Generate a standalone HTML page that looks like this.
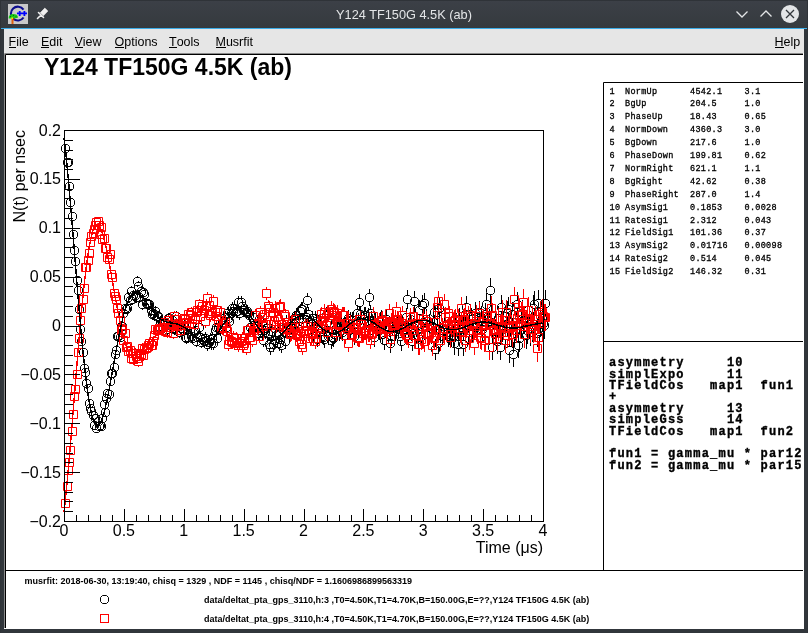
<!DOCTYPE html>
<html><head><meta charset="utf-8">
<style>
html,body{margin:0;padding:0;width:808px;height:633px;overflow:hidden;background:#31363b;}
body{position:relative;font-family:"Liberation Sans",sans-serif;}
#tb{position:absolute;left:0;top:0;width:808px;height:28px;background:linear-gradient(#3c4047,#353a3e);}
#blue{position:absolute;left:1px;top:28px;width:806px;height:1px;background:#3daee9;}
#menu{position:absolute;left:4px;top:29px;width:800px;height:25px;background:#e6e6e6;font-size:12.5px;color:#000;}
#menu span{position:absolute;top:6px;}
#menu u{text-decoration:none;position:relative;}#menu u::after{content:"";position:absolute;left:0;right:0;top:12px;height:1px;background:#000;}
#title{position:absolute;left:0;top:7px;width:808px;text-align:center;color:#e3e5e7;font-size:12.75px;}
#canvas{position:absolute;left:4px;top:53px;will-change:transform;}
#menu,#title{will-change:transform;}
</style></head><body>
<div id="tb"></div><div style="position:absolute;left:0;top:0;width:808px;height:1px;background:#2f3338"></div><div style="position:absolute;left:0;top:0;width:1px;height:633px;background:#2f3338"></div><div style="position:absolute;left:807px;top:0;width:1px;height:633px;background:#2f3338"></div>
<div id="title" style="padding-left:0px">Y124 TF150G 4.5K (ab)</div>
<svg style="position:absolute;left:0;top:0" width="808" height="30">
  <rect x="8" y="4" width="20" height="20" fill="#c9c9c9"/>
  <path d="M23.5 9.6 A6.95 6.95 0 1 0 23.56 17.5" stroke="#0c0c8e" stroke-width="2.1" fill="none"/>
  <path d="M17 13.4H27M19.7 11v5M24.4 11v5" stroke="#0000ff" stroke-width="1.8" fill="none"/>
  <path d="M8.6 18.2 C8.6 15.5 10.5 14.1 13.2 14.1 C15.9 14.1 18 15.2 18 17.6 C16.5 18.6 10.5 18.8 8.6 18.2Z" fill="#18c818"/>
  <path d="M10 16.5h1M13 15.5h1M15.5 16.8h1" stroke="#0a6a0a" stroke-width="1"/>
  <path d="M12.5 18.6V24" stroke="#e0600c" stroke-width="2"/>
  <circle cx="12.2" cy="18.3" r="1" fill="#f0e800"/>
  <circle cx="13.6" cy="19.4" r="0.8" fill="#c01010"/>
  <polygon points="44.8,8.1 47.9,11.1 43.4,15.8 40.3,12.8" fill="#f0f0f0" stroke="#f0f0f0" stroke-width="0.6" stroke-linejoin="round"/>
  <path d="M38.5 12.5L43.5 17.5M41 15L37.5 18.5" stroke="#f0f0f0" stroke-width="1.6" stroke-linecap="round"/>
  <path d="M736.5 11.5 l5.5 5.5 l5.5 -5.5" stroke="#e3e5e7" stroke-width="1.3" fill="none"/>
  <path d="M760.5 16.5 l5.5 -5.5 l5.5 5.5" stroke="#e3e5e7" stroke-width="1.3" fill="none"/>
  <circle cx="790" cy="14" r="9" fill="#e3e5e7"/>
  <path d="M786 10 l8 8 M794 10 l-8 8" stroke="#31363b" stroke-width="1.3"/>
</svg>
<div id="blue"></div>
<div id="menu">
 <span style="left:4.5px"><u>F</u>ile</span>
 <span style="left:37px"><u>E</u>dit</span>
 <span style="left:70.5px"><u>V</u>iew</span>
 <span style="left:110.5px"><u>O</u>ptions</span>
 <span style="left:165px"><u>T</u>ools</span>
 <span style="left:211.5px"><u>M</u>usrfit</span>
 <span style="left:770.5px"><u>H</u>elp</span>
</div>
<svg id="canvas" width="800" height="576" viewBox="4 53 800 576">
 <rect x="4" y="53" width="800" height="576" fill="#fff"/>
 <path d="M4.5 628 V53.5 H803" stroke="#8a8a8a" stroke-width="1" fill="none"/>
 <path d="M5.5 628 V54.5 H803" stroke="#000" stroke-width="1" fill="none"/>
 <text x="44" y="74.7" font-family="Liberation Sans" font-weight="bold" font-size="24" textLength="248" lengthAdjust="spacingAndGlyphs">Y124 TF150G 4.5K (ab)</text>
 <g clip-path="none"><path d="M128.5 292v1M128.5 302v1M130.5 295v1M130.5 305v1M131.5 286v1M131.5 296v1M132.5 294v1M132.5 304v1M133.5 290v1M133.5 300v1M135.5 290v1M135.5 300v1M136.5 292v1M136.5 302v1M137.5 276v1M137.5 286v1M138.5 281v1M138.5 291v1M139.5 292v1M139.5 302v1M141.5 286v1M141.5 296v1M142.5 299v1M142.5 309v1M143.5 287v1M143.5 297v1M144.5 289v1M144.5 299v1M146.5 298v1M146.5 308v1M147.5 299v1M147.5 309v1M148.5 299v1M148.5 309v1M149.5 299v1M149.5 309v1M151.5 305v1M151.5 315v1M152.5 309v1M152.5 319v1M153.5 308v1M153.5 318v1M154.5 310v1M154.5 320v1M155.5 306v1M155.5 316v1M157.5 311v1M157.5 321v1M158.5 311v1M158.5 321v1M159.5 321v1M159.5 331v1M160.5 316v1M160.5 326v1M162.5 317v1M162.5 327v1M163.5 318v1M163.5 328v1M164.5 317v1M164.5 327v1M165.5 318v1M165.5 328v1M167.5 324v1M167.5 334v1M168.5 313v1M168.5 323v1M169.5 313v1M169.5 323v1M170.5 320v1M170.5 330v1M172.5 315v1M172.5 325v1M173.5 323v1M173.5 333v1M174.5 324v1M174.5 334v1M175.5 320v1M175.5 330v1M176.5 311v1M176.5 321v1M178.5 320v1M178.5 330v1M179.5 327v1M179.5 337v1M180.5 319v1M180.5 329v1M181.5 323v1M181.5 333v1M183.5 325v1M183.5 335v1M184.5 320v1M184.5 330v1M185.5 332v1M185.5 342v1M186.5 333v1M186.5 343v1M188.5 332v1M188.5 342v1M189.5 320v1M189.5 330v1M190.5 326v1M190.5 336v1M191.5 331v1M191.5 341v1M192.5 333v1M192.5 343v1M194.5 327v1M194.5 337v1M195.5 325v1M195.5 335v1M196.5 336v1M196.5 346v1M197.5 332v1M197.5 342v1M199.5 322v1M199.5 332v1M200.5 332v1M200.5 342v1M201.5 337v1M201.5 347v1M202.5 334v1M202.5 344v1M204.5 336v1M204.5 346v1M205.5 332v2M205.5 343v2M206.5 334v2M206.5 345v2M207.5 338v2M207.5 349v2M209.5 336v2M209.5 347v2M210.5 333v2M210.5 344v2M211.5 337v2M211.5 348v2M212.5 332v2M212.5 343v2M213.5 337v2M213.5 348v2M215.5 324v2M215.5 335v2M216.5 321v2M216.5 332v2M217.5 332v2M217.5 343v2M218.5 321v2M218.5 332v2M220.5 323v2M220.5 334v2M221.5 321v2M221.5 332v2M222.5 321v2M222.5 332v2M223.5 317v2M223.5 328v2M225.5 311v2M225.5 322v2M226.5 321v2M226.5 332v2M227.5 307v2M227.5 318v2M228.5 312v2M228.5 323v2M229.5 315v2M229.5 326v2M231.5 307v2M231.5 318v2M232.5 302v2M232.5 313v2M233.5 305v2M233.5 316v2M234.5 302v2M234.5 313v2M236.5 305v2M236.5 316v2M237.5 305v2M237.5 316v2M238.5 296v2M238.5 307v2M239.5 307v2M239.5 318v2M241.5 296v2M241.5 307v2M242.5 300v2M242.5 311v2M243.5 304v2M243.5 315v2M244.5 304v2M244.5 315v2M246.5 306v2M246.5 317v2M247.5 305v2M247.5 316v2M248.5 307v2M248.5 318v2M249.5 309v2M249.5 320v2M250.5 321v2M250.5 332v2M252.5 324v2M252.5 335v2M253.5 311v2M253.5 322v2M254.5 319v2M254.5 330v2M255.5 320v2M255.5 331v2M257.5 320v2M257.5 331v2M258.5 327v2M258.5 338v2M259.5 313v2M259.5 324v2M260.5 324v2M260.5 335v2M262.5 327v2M262.5 338v2M263.5 334v2M263.5 345v2M264.5 324v2M264.5 335v2M265.5 326v2M265.5 337v2M266.5 322v2M266.5 333v2M268.5 327v2M268.5 338v2M269.5 337v3M269.5 349v3M270.5 340v3M270.5 352v3M271.5 324v3M271.5 336v3M273.5 337v3M273.5 349v3M274.5 333v3M274.5 345v3M275.5 333v3M275.5 345v3M276.5 328v3M276.5 340v3M278.5 327v3M278.5 339v3M279.5 336v3M279.5 348v3M280.5 332v3M280.5 344v3M281.5 338v3M281.5 350v3M283.5 322v3M283.5 334v3M284.5 325v3M284.5 337v3M285.5 334v3M285.5 346v3M286.5 315v3M286.5 327v3M287.5 320v3M287.5 332v3M289.5 325v3M289.5 337v3M290.5 319v3M290.5 331v3M291.5 319v3M291.5 331v3M292.5 313v3M292.5 325v3M294.5 311v3M294.5 323v3M295.5 315v3M295.5 327v3M296.5 308v3M296.5 320v3M297.5 327v3M297.5 339v3M299.5 311v3M299.5 323v3M300.5 304v3M300.5 316v3M301.5 302v3M301.5 314v3M302.5 302v3M302.5 314v3M303.5 315v3M303.5 327v3M305.5 319v3M305.5 331v3M306.5 310v3M306.5 322v3M307.5 293v3M307.5 305v3M308.5 307v3M308.5 319v3M310.5 315v3M310.5 327v3M311.5 322v3M311.5 334v3M312.5 311v3M312.5 323v3M313.5 316v3M313.5 328v3M315.5 311v3M315.5 323v3M316.5 314v3M316.5 326v3M317.5 332v3M317.5 344v3M318.5 318v3M318.5 330v3M320.5 313v3M320.5 325v3M321.5 324v3M321.5 336v3M322.5 329v3M322.5 341v3M323.5 330v3M323.5 342v3M324.5 331v4M324.5 344v4M326.5 307v4M326.5 320v4M327.5 314v4M327.5 327v4M328.5 328v4M328.5 341v4M329.5 315v4M329.5 328v4M331.5 332v4M331.5 345v4M332.5 329v4M332.5 342v4M333.5 330v4M333.5 343v4M334.5 326v4M334.5 339v4M336.5 320v4M336.5 333v4M337.5 310v4M337.5 323v4M338.5 319v4M338.5 332v4M339.5 324v4M339.5 337v4M340.5 322v4M340.5 335v4M342.5 324v4M342.5 337v4M343.5 318v4M343.5 331v4M344.5 327v4M344.5 340v4M345.5 317v4M345.5 330v4M347.5 315v4M347.5 328v4M348.5 310v4M348.5 323v4M349.5 322v4M349.5 335v4M350.5 312v4M350.5 325v4M352.5 312v4M352.5 325v4M353.5 320v4M353.5 333v4M354.5 328v4M354.5 341v4M355.5 316v4M355.5 329v4M357.5 305v4M357.5 318v4M358.5 313v4M358.5 326v4M359.5 294v4M359.5 307v4M360.5 306v4M360.5 319v4M361.5 316v4M361.5 329v4M363.5 311v4M363.5 324v4M364.5 307v4M364.5 320v4M365.5 307v4M365.5 320v4M366.5 313v4M366.5 326v4M368.5 308v4M368.5 321v4M369.5 289v4M369.5 302v4M370.5 305v4M370.5 318v4M371.5 311v5M371.5 325v5M373.5 317v5M373.5 331v5M374.5 328v5M374.5 342v5M375.5 313v5M375.5 327v5M376.5 319v5M376.5 333v5M377.5 317v5M377.5 331v5M379.5 321v5M379.5 335v5M380.5 312v5M380.5 326v5M381.5 310v5M381.5 324v5M382.5 325v5M382.5 339v5M384.5 331v5M384.5 345v5M385.5 318v5M385.5 332v5M386.5 310v5M386.5 324v5M387.5 318v5M387.5 332v5M389.5 318v5M389.5 332v5M390.5 334v5M390.5 348v5M391.5 327v5M391.5 341v5M392.5 317v5M392.5 331v5M394.5 319v5M394.5 333v5M395.5 322v5M395.5 336v5M396.5 317v5M396.5 331v5M397.5 314v5M397.5 328v5M398.5 320v5M398.5 334v5M400.5 327v5M400.5 341v5M401.5 332v5M401.5 346v5M402.5 318v5M402.5 332v5M403.5 320v5M403.5 334v5M405.5 320v5M405.5 334v5M406.5 308v5M406.5 322v5M407.5 290v5M407.5 304v5M408.5 318v5M408.5 332v5M410.5 310v5M410.5 324v5M411.5 322v5M411.5 336v5M412.5 332v5M412.5 346v5M413.5 318v5M413.5 332v5M414.5 291v6M414.5 306v6M416.5 316v6M416.5 331v6M417.5 313v6M417.5 328v6M418.5 327v6M418.5 342v6M419.5 300v6M419.5 315v6M421.5 326v6M421.5 341v6M422.5 295v6M422.5 310v6M423.5 312v6M423.5 327v6M424.5 293v6M424.5 308v6M426.5 309v6M426.5 324v6M427.5 317v6M427.5 332v6M428.5 324v6M428.5 339v6M429.5 314v6M429.5 329v6M431.5 323v6M431.5 338v6M432.5 318v6M432.5 333v6M433.5 312v6M433.5 327v6M434.5 302v6M434.5 317v6M435.5 339v6M435.5 354v6M437.5 302v6M437.5 317v6M438.5 333v6M438.5 348v6M439.5 298v6M439.5 313v6M440.5 322v6M440.5 337v6M442.5 320v6M442.5 335v6M443.5 322v6M443.5 337v6M444.5 316v6M444.5 331v6M445.5 319v6M445.5 334v6M447.5 322v6M447.5 337v6M448.5 326v6M448.5 341v6M449.5 324v6M449.5 339v6M450.5 319v6M450.5 334v6M451.5 325v6M451.5 340v6M453.5 325v7M453.5 341v7M454.5 332v7M454.5 348v7M455.5 318v7M455.5 334v7M456.5 313v7M456.5 329v7M458.5 333v7M458.5 349v7M459.5 308v7M459.5 324v7M460.5 318v7M460.5 334v7M461.5 316v7M461.5 332v7M463.5 333v7M463.5 349v7M464.5 310v7M464.5 326v7M465.5 303v7M465.5 319v7M466.5 296v7M466.5 312v7M468.5 321v7M468.5 337v7M469.5 315v7M469.5 331v7M470.5 306v7M470.5 322v7M471.5 308v7M471.5 324v7M472.5 319v7M472.5 335v7M474.5 312v7M474.5 328v7M475.5 302v7M475.5 318v7M476.5 306v7M476.5 322v7M477.5 312v7M477.5 328v7M479.5 301v7M479.5 317v7M480.5 326v7M480.5 342v7M481.5 306v7M481.5 322v7M482.5 318v7M482.5 334v7M484.5 315v7M484.5 331v7M485.5 303v7M485.5 319v7M486.5 293v7M486.5 309v7M487.5 305v8M487.5 322v8M489.5 309v8M489.5 326v8M490.5 278v8M490.5 295v8M491.5 303v8M491.5 320v8M492.5 335v8M492.5 352v8M493.5 318v8M493.5 335v8M495.5 319v8M495.5 336v8M496.5 319v8M496.5 336v8M497.5 329v8M497.5 346v8M498.5 306v8M498.5 323v8M500.5 335v8M500.5 352v8M501.5 295v8M501.5 312v8M502.5 317v8M502.5 334v8M503.5 313v8M503.5 330v8M505.5 323v8M505.5 340v8M506.5 304v8M506.5 321v8M507.5 301v8M507.5 318v8M508.5 297v8M508.5 314v8M509.5 338v8M509.5 355v8M511.5 322v8M511.5 339v8M512.5 302v8M512.5 319v8M513.5 342v8M513.5 359v8M514.5 322v8M514.5 339v8M516.5 318v8M516.5 335v8M517.5 292v8M517.5 309v8M518.5 333v8M518.5 350v8M519.5 325v9M519.5 343v9M521.5 311v9M521.5 329v9M522.5 300v9M522.5 318v9M523.5 307v9M523.5 325v9M524.5 307v9M524.5 325v9M526.5 322v9M526.5 340v9M527.5 317v9M527.5 335v9M528.5 297v9M528.5 315v9M529.5 311v9M529.5 329v9M530.5 319v9M530.5 337v9M532.5 315v9M532.5 333v9M533.5 295v9M533.5 313v9M534.5 291v9M534.5 309v9M535.5 306v9M535.5 324v9M537.5 320v9M537.5 338v9M538.5 290v9M538.5 308v9M539.5 318v9M539.5 336v9M540.5 309v9M540.5 327v9M542.5 305v9M542.5 323v9M543.5 310v9M543.5 328v9M544.5 312v9M544.5 330v9M545.5 290v9M545.5 308v9" stroke="#000000" stroke-width="1" fill="none" shape-rendering="crispEdges"/>
<path d="M63.5 144.5h4l2 2v4l-2 2h-4l-2 -2v-4zM65.5 158.5h4l2 2v4l-2 2h-4l-2 -2v-4zM66.5 158.5h4l2 2v4l-2 2h-4l-2 -2v-4zM67.5 182.5h4l2 2v4l-2 2h-4l-2 -2v-4zM68.5 198.5h4l2 2v4l-2 2h-4l-2 -2v-4zM70.5 212.5h4l2 2v4l-2 2h-4l-2 -2v-4zM71.5 230.5h4l2 2v4l-2 2h-4l-2 -2v-4zM72.5 246.5h4l2 2v4l-2 2h-4l-2 -2v-4zM73.5 257.5h4l2 2v4l-2 2h-4l-2 -2v-4zM75.5 276.5h4l2 2v4l-2 2h-4l-2 -2v-4zM76.5 286.5h4l2 2v4l-2 2h-4l-2 -2v-4zM77.5 305.5h4l2 2v4l-2 2h-4l-2 -2v-4zM78.5 325.5h4l2 2v4l-2 2h-4l-2 -2v-4zM79.5 337.5h4l2 2v4l-2 2h-4l-2 -2v-4zM81.5 348.5h4l2 2v4l-2 2h-4l-2 -2v-4zM82.5 364.5h4l2 2v4l-2 2h-4l-2 -2v-4zM83.5 368.5h4l2 2v4l-2 2h-4l-2 -2v-4zM84.5 379.5h4l2 2v4l-2 2h-4l-2 -2v-4zM86.5 384.5h4l2 2v4l-2 2h-4l-2 -2v-4zM87.5 399.5h4l2 2v4l-2 2h-4l-2 -2v-4zM88.5 404.5h4l2 2v4l-2 2h-4l-2 -2v-4zM89.5 407.5h4l2 2v4l-2 2h-4l-2 -2v-4zM91.5 411.5h4l2 2v4l-2 2h-4l-2 -2v-4zM92.5 421.5h4l2 2v4l-2 2h-4l-2 -2v-4zM93.5 414.5h4l2 2v4l-2 2h-4l-2 -2v-4zM94.5 424.5h4l2 2v4l-2 2h-4l-2 -2v-4zM96.5 417.5h4l2 2v4l-2 2h-4l-2 -2v-4zM97.5 422.5h4l2 2v4l-2 2h-4l-2 -2v-4zM98.5 421.5h4l2 2v4l-2 2h-4l-2 -2v-4zM99.5 422.5h4l2 2v4l-2 2h-4l-2 -2v-4zM100.5 414.5h4l2 2v4l-2 2h-4l-2 -2v-4zM102.5 400.5h4l2 2v4l-2 2h-4l-2 -2v-4zM103.5 408.5h4l2 2v4l-2 2h-4l-2 -2v-4zM104.5 394.5h4l2 2v4l-2 2h-4l-2 -2v-4zM105.5 389.5h4l2 2v4l-2 2h-4l-2 -2v-4zM107.5 390.5h4l2 2v4l-2 2h-4l-2 -2v-4zM108.5 377.5h4l2 2v4l-2 2h-4l-2 -2v-4zM109.5 369.5h4l2 2v4l-2 2h-4l-2 -2v-4zM110.5 369.5h4l2 2v4l-2 2h-4l-2 -2v-4zM112.5 363.5h4l2 2v4l-2 2h-4l-2 -2v-4zM113.5 350.5h4l2 2v4l-2 2h-4l-2 -2v-4zM114.5 346.5h4l2 2v4l-2 2h-4l-2 -2v-4zM115.5 332.5h4l2 2v4l-2 2h-4l-2 -2v-4zM116.5 332.5h4l2 2v4l-2 2h-4l-2 -2v-4zM118.5 333.5h4l2 2v4l-2 2h-4l-2 -2v-4zM119.5 322.5h4l2 2v4l-2 2h-4l-2 -2v-4zM120.5 322.5h4l2 2v4l-2 2h-4l-2 -2v-4zM121.5 309.5h4l2 2v4l-2 2h-4l-2 -2v-4zM123.5 304.5h4l2 2v4l-2 2h-4l-2 -2v-4zM124.5 305.5h4l2 2v4l-2 2h-4l-2 -2v-4zM125.5 304.5h4l2 2v4l-2 2h-4l-2 -2v-4zM126.5 293.5h4l2 2v4l-2 2h-4l-2 -2v-4zM128.5 296.5h4l2 2v4l-2 2h-4l-2 -2v-4zM129.5 287.5h4l2 2v4l-2 2h-4l-2 -2v-4zM130.5 295.5h4l2 2v4l-2 2h-4l-2 -2v-4zM131.5 291.5h4l2 2v4l-2 2h-4l-2 -2v-4zM133.5 291.5h4l2 2v4l-2 2h-4l-2 -2v-4zM134.5 293.5h4l2 2v4l-2 2h-4l-2 -2v-4zM135.5 277.5h4l2 2v4l-2 2h-4l-2 -2v-4zM136.5 282.5h4l2 2v4l-2 2h-4l-2 -2v-4zM137.5 293.5h4l2 2v4l-2 2h-4l-2 -2v-4zM139.5 287.5h4l2 2v4l-2 2h-4l-2 -2v-4zM140.5 300.5h4l2 2v4l-2 2h-4l-2 -2v-4zM141.5 288.5h4l2 2v4l-2 2h-4l-2 -2v-4zM142.5 290.5h4l2 2v4l-2 2h-4l-2 -2v-4zM144.5 299.5h4l2 2v4l-2 2h-4l-2 -2v-4zM145.5 300.5h4l2 2v4l-2 2h-4l-2 -2v-4zM146.5 300.5h4l2 2v4l-2 2h-4l-2 -2v-4zM147.5 300.5h4l2 2v4l-2 2h-4l-2 -2v-4zM149.5 306.5h4l2 2v4l-2 2h-4l-2 -2v-4zM150.5 310.5h4l2 2v4l-2 2h-4l-2 -2v-4zM151.5 309.5h4l2 2v4l-2 2h-4l-2 -2v-4zM152.5 311.5h4l2 2v4l-2 2h-4l-2 -2v-4zM153.5 307.5h4l2 2v4l-2 2h-4l-2 -2v-4zM155.5 312.5h4l2 2v4l-2 2h-4l-2 -2v-4zM156.5 312.5h4l2 2v4l-2 2h-4l-2 -2v-4zM157.5 322.5h4l2 2v4l-2 2h-4l-2 -2v-4zM158.5 317.5h4l2 2v4l-2 2h-4l-2 -2v-4zM160.5 318.5h4l2 2v4l-2 2h-4l-2 -2v-4zM161.5 319.5h4l2 2v4l-2 2h-4l-2 -2v-4zM162.5 318.5h4l2 2v4l-2 2h-4l-2 -2v-4zM163.5 319.5h4l2 2v4l-2 2h-4l-2 -2v-4zM165.5 325.5h4l2 2v4l-2 2h-4l-2 -2v-4zM166.5 314.5h4l2 2v4l-2 2h-4l-2 -2v-4zM167.5 314.5h4l2 2v4l-2 2h-4l-2 -2v-4zM168.5 321.5h4l2 2v4l-2 2h-4l-2 -2v-4zM170.5 316.5h4l2 2v4l-2 2h-4l-2 -2v-4zM171.5 324.5h4l2 2v4l-2 2h-4l-2 -2v-4zM172.5 325.5h4l2 2v4l-2 2h-4l-2 -2v-4zM173.5 321.5h4l2 2v4l-2 2h-4l-2 -2v-4zM174.5 312.5h4l2 2v4l-2 2h-4l-2 -2v-4zM176.5 321.5h4l2 2v4l-2 2h-4l-2 -2v-4zM177.5 328.5h4l2 2v4l-2 2h-4l-2 -2v-4zM178.5 320.5h4l2 2v4l-2 2h-4l-2 -2v-4zM179.5 324.5h4l2 2v4l-2 2h-4l-2 -2v-4zM181.5 326.5h4l2 2v4l-2 2h-4l-2 -2v-4zM182.5 321.5h4l2 2v4l-2 2h-4l-2 -2v-4zM183.5 333.5h4l2 2v4l-2 2h-4l-2 -2v-4zM184.5 334.5h4l2 2v4l-2 2h-4l-2 -2v-4zM186.5 333.5h4l2 2v4l-2 2h-4l-2 -2v-4zM187.5 321.5h4l2 2v4l-2 2h-4l-2 -2v-4zM188.5 327.5h4l2 2v4l-2 2h-4l-2 -2v-4zM189.5 332.5h4l2 2v4l-2 2h-4l-2 -2v-4zM190.5 334.5h4l2 2v4l-2 2h-4l-2 -2v-4zM192.5 328.5h4l2 2v4l-2 2h-4l-2 -2v-4zM193.5 326.5h4l2 2v4l-2 2h-4l-2 -2v-4zM194.5 337.5h4l2 2v4l-2 2h-4l-2 -2v-4zM195.5 333.5h4l2 2v4l-2 2h-4l-2 -2v-4zM197.5 323.5h4l2 2v4l-2 2h-4l-2 -2v-4zM198.5 333.5h4l2 2v4l-2 2h-4l-2 -2v-4zM199.5 338.5h4l2 2v4l-2 2h-4l-2 -2v-4zM200.5 335.5h4l2 2v4l-2 2h-4l-2 -2v-4zM202.5 337.5h4l2 2v4l-2 2h-4l-2 -2v-4zM203.5 334.5h4l2 2v4l-2 2h-4l-2 -2v-4zM204.5 336.5h4l2 2v4l-2 2h-4l-2 -2v-4zM205.5 340.5h4l2 2v4l-2 2h-4l-2 -2v-4zM207.5 338.5h4l2 2v4l-2 2h-4l-2 -2v-4zM208.5 335.5h4l2 2v4l-2 2h-4l-2 -2v-4zM209.5 339.5h4l2 2v4l-2 2h-4l-2 -2v-4zM210.5 334.5h4l2 2v4l-2 2h-4l-2 -2v-4zM211.5 339.5h4l2 2v4l-2 2h-4l-2 -2v-4zM213.5 326.5h4l2 2v4l-2 2h-4l-2 -2v-4zM214.5 323.5h4l2 2v4l-2 2h-4l-2 -2v-4zM215.5 334.5h4l2 2v4l-2 2h-4l-2 -2v-4zM216.5 323.5h4l2 2v4l-2 2h-4l-2 -2v-4zM218.5 325.5h4l2 2v4l-2 2h-4l-2 -2v-4zM219.5 323.5h4l2 2v4l-2 2h-4l-2 -2v-4zM220.5 323.5h4l2 2v4l-2 2h-4l-2 -2v-4zM221.5 319.5h4l2 2v4l-2 2h-4l-2 -2v-4zM223.5 313.5h4l2 2v4l-2 2h-4l-2 -2v-4zM224.5 323.5h4l2 2v4l-2 2h-4l-2 -2v-4zM225.5 309.5h4l2 2v4l-2 2h-4l-2 -2v-4zM226.5 314.5h4l2 2v4l-2 2h-4l-2 -2v-4zM227.5 317.5h4l2 2v4l-2 2h-4l-2 -2v-4zM229.5 309.5h4l2 2v4l-2 2h-4l-2 -2v-4zM230.5 304.5h4l2 2v4l-2 2h-4l-2 -2v-4zM231.5 307.5h4l2 2v4l-2 2h-4l-2 -2v-4zM232.5 304.5h4l2 2v4l-2 2h-4l-2 -2v-4zM234.5 307.5h4l2 2v4l-2 2h-4l-2 -2v-4zM235.5 307.5h4l2 2v4l-2 2h-4l-2 -2v-4zM236.5 298.5h4l2 2v4l-2 2h-4l-2 -2v-4zM237.5 309.5h4l2 2v4l-2 2h-4l-2 -2v-4zM239.5 298.5h4l2 2v4l-2 2h-4l-2 -2v-4zM240.5 302.5h4l2 2v4l-2 2h-4l-2 -2v-4zM241.5 306.5h4l2 2v4l-2 2h-4l-2 -2v-4zM242.5 306.5h4l2 2v4l-2 2h-4l-2 -2v-4zM244.5 308.5h4l2 2v4l-2 2h-4l-2 -2v-4zM245.5 307.5h4l2 2v4l-2 2h-4l-2 -2v-4zM246.5 309.5h4l2 2v4l-2 2h-4l-2 -2v-4zM247.5 311.5h4l2 2v4l-2 2h-4l-2 -2v-4zM248.5 323.5h4l2 2v4l-2 2h-4l-2 -2v-4zM250.5 326.5h4l2 2v4l-2 2h-4l-2 -2v-4zM251.5 313.5h4l2 2v4l-2 2h-4l-2 -2v-4zM252.5 321.5h4l2 2v4l-2 2h-4l-2 -2v-4zM253.5 322.5h4l2 2v4l-2 2h-4l-2 -2v-4zM255.5 322.5h4l2 2v4l-2 2h-4l-2 -2v-4zM256.5 329.5h4l2 2v4l-2 2h-4l-2 -2v-4zM257.5 315.5h4l2 2v4l-2 2h-4l-2 -2v-4zM258.5 326.5h4l2 2v4l-2 2h-4l-2 -2v-4zM260.5 329.5h4l2 2v4l-2 2h-4l-2 -2v-4zM261.5 336.5h4l2 2v4l-2 2h-4l-2 -2v-4zM262.5 326.5h4l2 2v4l-2 2h-4l-2 -2v-4zM263.5 328.5h4l2 2v4l-2 2h-4l-2 -2v-4zM264.5 324.5h4l2 2v4l-2 2h-4l-2 -2v-4zM266.5 329.5h4l2 2v4l-2 2h-4l-2 -2v-4zM267.5 340.5h4l2 2v4l-2 2h-4l-2 -2v-4zM268.5 343.5h4l2 2v4l-2 2h-4l-2 -2v-4zM269.5 327.5h4l2 2v4l-2 2h-4l-2 -2v-4zM271.5 340.5h4l2 2v4l-2 2h-4l-2 -2v-4zM272.5 336.5h4l2 2v4l-2 2h-4l-2 -2v-4zM273.5 336.5h4l2 2v4l-2 2h-4l-2 -2v-4zM274.5 331.5h4l2 2v4l-2 2h-4l-2 -2v-4zM276.5 330.5h4l2 2v4l-2 2h-4l-2 -2v-4zM277.5 339.5h4l2 2v4l-2 2h-4l-2 -2v-4zM278.5 335.5h4l2 2v4l-2 2h-4l-2 -2v-4zM279.5 341.5h4l2 2v4l-2 2h-4l-2 -2v-4zM281.5 325.5h4l2 2v4l-2 2h-4l-2 -2v-4zM282.5 328.5h4l2 2v4l-2 2h-4l-2 -2v-4zM283.5 337.5h4l2 2v4l-2 2h-4l-2 -2v-4zM284.5 318.5h4l2 2v4l-2 2h-4l-2 -2v-4zM285.5 323.5h4l2 2v4l-2 2h-4l-2 -2v-4zM287.5 328.5h4l2 2v4l-2 2h-4l-2 -2v-4zM288.5 322.5h4l2 2v4l-2 2h-4l-2 -2v-4zM289.5 322.5h4l2 2v4l-2 2h-4l-2 -2v-4zM290.5 316.5h4l2 2v4l-2 2h-4l-2 -2v-4zM292.5 314.5h4l2 2v4l-2 2h-4l-2 -2v-4zM293.5 318.5h4l2 2v4l-2 2h-4l-2 -2v-4zM294.5 311.5h4l2 2v4l-2 2h-4l-2 -2v-4zM295.5 330.5h4l2 2v4l-2 2h-4l-2 -2v-4zM297.5 314.5h4l2 2v4l-2 2h-4l-2 -2v-4zM298.5 307.5h4l2 2v4l-2 2h-4l-2 -2v-4zM299.5 305.5h4l2 2v4l-2 2h-4l-2 -2v-4zM300.5 305.5h4l2 2v4l-2 2h-4l-2 -2v-4zM301.5 318.5h4l2 2v4l-2 2h-4l-2 -2v-4zM303.5 322.5h4l2 2v4l-2 2h-4l-2 -2v-4zM304.5 313.5h4l2 2v4l-2 2h-4l-2 -2v-4zM305.5 296.5h4l2 2v4l-2 2h-4l-2 -2v-4zM306.5 310.5h4l2 2v4l-2 2h-4l-2 -2v-4zM308.5 318.5h4l2 2v4l-2 2h-4l-2 -2v-4zM309.5 325.5h4l2 2v4l-2 2h-4l-2 -2v-4zM310.5 314.5h4l2 2v4l-2 2h-4l-2 -2v-4zM311.5 319.5h4l2 2v4l-2 2h-4l-2 -2v-4zM313.5 314.5h4l2 2v4l-2 2h-4l-2 -2v-4zM314.5 317.5h4l2 2v4l-2 2h-4l-2 -2v-4zM315.5 335.5h4l2 2v4l-2 2h-4l-2 -2v-4zM316.5 321.5h4l2 2v4l-2 2h-4l-2 -2v-4zM318.5 316.5h4l2 2v4l-2 2h-4l-2 -2v-4zM319.5 327.5h4l2 2v4l-2 2h-4l-2 -2v-4zM320.5 332.5h4l2 2v4l-2 2h-4l-2 -2v-4zM321.5 333.5h4l2 2v4l-2 2h-4l-2 -2v-4zM322.5 335.5h4l2 2v4l-2 2h-4l-2 -2v-4zM324.5 311.5h4l2 2v4l-2 2h-4l-2 -2v-4zM325.5 318.5h4l2 2v4l-2 2h-4l-2 -2v-4zM326.5 332.5h4l2 2v4l-2 2h-4l-2 -2v-4zM327.5 319.5h4l2 2v4l-2 2h-4l-2 -2v-4zM329.5 336.5h4l2 2v4l-2 2h-4l-2 -2v-4zM330.5 333.5h4l2 2v4l-2 2h-4l-2 -2v-4zM331.5 334.5h4l2 2v4l-2 2h-4l-2 -2v-4zM332.5 330.5h4l2 2v4l-2 2h-4l-2 -2v-4zM334.5 324.5h4l2 2v4l-2 2h-4l-2 -2v-4zM335.5 314.5h4l2 2v4l-2 2h-4l-2 -2v-4zM336.5 323.5h4l2 2v4l-2 2h-4l-2 -2v-4zM337.5 328.5h4l2 2v4l-2 2h-4l-2 -2v-4zM338.5 326.5h4l2 2v4l-2 2h-4l-2 -2v-4zM340.5 328.5h4l2 2v4l-2 2h-4l-2 -2v-4zM341.5 322.5h4l2 2v4l-2 2h-4l-2 -2v-4zM342.5 331.5h4l2 2v4l-2 2h-4l-2 -2v-4zM343.5 321.5h4l2 2v4l-2 2h-4l-2 -2v-4zM345.5 319.5h4l2 2v4l-2 2h-4l-2 -2v-4zM346.5 314.5h4l2 2v4l-2 2h-4l-2 -2v-4zM347.5 326.5h4l2 2v4l-2 2h-4l-2 -2v-4zM348.5 316.5h4l2 2v4l-2 2h-4l-2 -2v-4zM350.5 316.5h4l2 2v4l-2 2h-4l-2 -2v-4zM351.5 324.5h4l2 2v4l-2 2h-4l-2 -2v-4zM352.5 332.5h4l2 2v4l-2 2h-4l-2 -2v-4zM353.5 320.5h4l2 2v4l-2 2h-4l-2 -2v-4zM355.5 309.5h4l2 2v4l-2 2h-4l-2 -2v-4zM356.5 317.5h4l2 2v4l-2 2h-4l-2 -2v-4zM357.5 298.5h4l2 2v4l-2 2h-4l-2 -2v-4zM358.5 310.5h4l2 2v4l-2 2h-4l-2 -2v-4zM359.5 320.5h4l2 2v4l-2 2h-4l-2 -2v-4zM361.5 315.5h4l2 2v4l-2 2h-4l-2 -2v-4zM362.5 311.5h4l2 2v4l-2 2h-4l-2 -2v-4zM363.5 311.5h4l2 2v4l-2 2h-4l-2 -2v-4zM364.5 317.5h4l2 2v4l-2 2h-4l-2 -2v-4zM366.5 312.5h4l2 2v4l-2 2h-4l-2 -2v-4zM367.5 293.5h4l2 2v4l-2 2h-4l-2 -2v-4zM368.5 309.5h4l2 2v4l-2 2h-4l-2 -2v-4zM369.5 316.5h4l2 2v4l-2 2h-4l-2 -2v-4zM371.5 322.5h4l2 2v4l-2 2h-4l-2 -2v-4zM372.5 333.5h4l2 2v4l-2 2h-4l-2 -2v-4zM373.5 318.5h4l2 2v4l-2 2h-4l-2 -2v-4zM374.5 324.5h4l2 2v4l-2 2h-4l-2 -2v-4zM375.5 322.5h4l2 2v4l-2 2h-4l-2 -2v-4zM377.5 326.5h4l2 2v4l-2 2h-4l-2 -2v-4zM378.5 317.5h4l2 2v4l-2 2h-4l-2 -2v-4zM379.5 315.5h4l2 2v4l-2 2h-4l-2 -2v-4zM380.5 330.5h4l2 2v4l-2 2h-4l-2 -2v-4zM382.5 336.5h4l2 2v4l-2 2h-4l-2 -2v-4zM383.5 323.5h4l2 2v4l-2 2h-4l-2 -2v-4zM384.5 315.5h4l2 2v4l-2 2h-4l-2 -2v-4zM385.5 323.5h4l2 2v4l-2 2h-4l-2 -2v-4zM387.5 323.5h4l2 2v4l-2 2h-4l-2 -2v-4zM388.5 339.5h4l2 2v4l-2 2h-4l-2 -2v-4zM389.5 332.5h4l2 2v4l-2 2h-4l-2 -2v-4zM390.5 322.5h4l2 2v4l-2 2h-4l-2 -2v-4zM392.5 324.5h4l2 2v4l-2 2h-4l-2 -2v-4zM393.5 327.5h4l2 2v4l-2 2h-4l-2 -2v-4zM394.5 322.5h4l2 2v4l-2 2h-4l-2 -2v-4zM395.5 319.5h4l2 2v4l-2 2h-4l-2 -2v-4zM396.5 325.5h4l2 2v4l-2 2h-4l-2 -2v-4zM398.5 332.5h4l2 2v4l-2 2h-4l-2 -2v-4zM399.5 337.5h4l2 2v4l-2 2h-4l-2 -2v-4zM400.5 323.5h4l2 2v4l-2 2h-4l-2 -2v-4zM401.5 325.5h4l2 2v4l-2 2h-4l-2 -2v-4zM403.5 325.5h4l2 2v4l-2 2h-4l-2 -2v-4zM404.5 313.5h4l2 2v4l-2 2h-4l-2 -2v-4zM405.5 295.5h4l2 2v4l-2 2h-4l-2 -2v-4zM406.5 323.5h4l2 2v4l-2 2h-4l-2 -2v-4zM408.5 315.5h4l2 2v4l-2 2h-4l-2 -2v-4zM409.5 327.5h4l2 2v4l-2 2h-4l-2 -2v-4zM410.5 337.5h4l2 2v4l-2 2h-4l-2 -2v-4zM411.5 323.5h4l2 2v4l-2 2h-4l-2 -2v-4zM412.5 297.5h4l2 2v4l-2 2h-4l-2 -2v-4zM414.5 322.5h4l2 2v4l-2 2h-4l-2 -2v-4zM415.5 319.5h4l2 2v4l-2 2h-4l-2 -2v-4zM416.5 333.5h4l2 2v4l-2 2h-4l-2 -2v-4zM417.5 306.5h4l2 2v4l-2 2h-4l-2 -2v-4zM419.5 332.5h4l2 2v4l-2 2h-4l-2 -2v-4zM420.5 301.5h4l2 2v4l-2 2h-4l-2 -2v-4zM421.5 318.5h4l2 2v4l-2 2h-4l-2 -2v-4zM422.5 299.5h4l2 2v4l-2 2h-4l-2 -2v-4zM424.5 315.5h4l2 2v4l-2 2h-4l-2 -2v-4zM425.5 323.5h4l2 2v4l-2 2h-4l-2 -2v-4zM426.5 330.5h4l2 2v4l-2 2h-4l-2 -2v-4zM427.5 320.5h4l2 2v4l-2 2h-4l-2 -2v-4zM429.5 329.5h4l2 2v4l-2 2h-4l-2 -2v-4zM430.5 324.5h4l2 2v4l-2 2h-4l-2 -2v-4zM431.5 318.5h4l2 2v4l-2 2h-4l-2 -2v-4zM432.5 308.5h4l2 2v4l-2 2h-4l-2 -2v-4zM433.5 345.5h4l2 2v4l-2 2h-4l-2 -2v-4zM435.5 308.5h4l2 2v4l-2 2h-4l-2 -2v-4zM436.5 339.5h4l2 2v4l-2 2h-4l-2 -2v-4zM437.5 304.5h4l2 2v4l-2 2h-4l-2 -2v-4zM438.5 328.5h4l2 2v4l-2 2h-4l-2 -2v-4zM440.5 326.5h4l2 2v4l-2 2h-4l-2 -2v-4zM441.5 328.5h4l2 2v4l-2 2h-4l-2 -2v-4zM442.5 322.5h4l2 2v4l-2 2h-4l-2 -2v-4zM443.5 325.5h4l2 2v4l-2 2h-4l-2 -2v-4zM445.5 328.5h4l2 2v4l-2 2h-4l-2 -2v-4zM446.5 332.5h4l2 2v4l-2 2h-4l-2 -2v-4zM447.5 330.5h4l2 2v4l-2 2h-4l-2 -2v-4zM448.5 325.5h4l2 2v4l-2 2h-4l-2 -2v-4zM449.5 331.5h4l2 2v4l-2 2h-4l-2 -2v-4zM451.5 332.5h4l2 2v4l-2 2h-4l-2 -2v-4zM452.5 339.5h4l2 2v4l-2 2h-4l-2 -2v-4zM453.5 325.5h4l2 2v4l-2 2h-4l-2 -2v-4zM454.5 320.5h4l2 2v4l-2 2h-4l-2 -2v-4zM456.5 340.5h4l2 2v4l-2 2h-4l-2 -2v-4zM457.5 315.5h4l2 2v4l-2 2h-4l-2 -2v-4zM458.5 325.5h4l2 2v4l-2 2h-4l-2 -2v-4zM459.5 323.5h4l2 2v4l-2 2h-4l-2 -2v-4zM461.5 340.5h4l2 2v4l-2 2h-4l-2 -2v-4zM462.5 317.5h4l2 2v4l-2 2h-4l-2 -2v-4zM463.5 310.5h4l2 2v4l-2 2h-4l-2 -2v-4zM464.5 303.5h4l2 2v4l-2 2h-4l-2 -2v-4zM466.5 328.5h4l2 2v4l-2 2h-4l-2 -2v-4zM467.5 322.5h4l2 2v4l-2 2h-4l-2 -2v-4zM468.5 313.5h4l2 2v4l-2 2h-4l-2 -2v-4zM469.5 315.5h4l2 2v4l-2 2h-4l-2 -2v-4zM470.5 326.5h4l2 2v4l-2 2h-4l-2 -2v-4zM472.5 319.5h4l2 2v4l-2 2h-4l-2 -2v-4zM473.5 309.5h4l2 2v4l-2 2h-4l-2 -2v-4zM474.5 313.5h4l2 2v4l-2 2h-4l-2 -2v-4zM475.5 319.5h4l2 2v4l-2 2h-4l-2 -2v-4zM477.5 308.5h4l2 2v4l-2 2h-4l-2 -2v-4zM478.5 333.5h4l2 2v4l-2 2h-4l-2 -2v-4zM479.5 313.5h4l2 2v4l-2 2h-4l-2 -2v-4zM480.5 325.5h4l2 2v4l-2 2h-4l-2 -2v-4zM482.5 322.5h4l2 2v4l-2 2h-4l-2 -2v-4zM483.5 310.5h4l2 2v4l-2 2h-4l-2 -2v-4zM484.5 300.5h4l2 2v4l-2 2h-4l-2 -2v-4zM485.5 313.5h4l2 2v4l-2 2h-4l-2 -2v-4zM487.5 317.5h4l2 2v4l-2 2h-4l-2 -2v-4zM488.5 286.5h4l2 2v4l-2 2h-4l-2 -2v-4zM489.5 311.5h4l2 2v4l-2 2h-4l-2 -2v-4zM490.5 343.5h4l2 2v4l-2 2h-4l-2 -2v-4zM491.5 326.5h4l2 2v4l-2 2h-4l-2 -2v-4zM493.5 327.5h4l2 2v4l-2 2h-4l-2 -2v-4zM494.5 327.5h4l2 2v4l-2 2h-4l-2 -2v-4zM495.5 337.5h4l2 2v4l-2 2h-4l-2 -2v-4zM496.5 314.5h4l2 2v4l-2 2h-4l-2 -2v-4zM498.5 343.5h4l2 2v4l-2 2h-4l-2 -2v-4zM499.5 303.5h4l2 2v4l-2 2h-4l-2 -2v-4zM500.5 325.5h4l2 2v4l-2 2h-4l-2 -2v-4zM501.5 321.5h4l2 2v4l-2 2h-4l-2 -2v-4zM503.5 331.5h4l2 2v4l-2 2h-4l-2 -2v-4zM504.5 312.5h4l2 2v4l-2 2h-4l-2 -2v-4zM505.5 309.5h4l2 2v4l-2 2h-4l-2 -2v-4zM506.5 305.5h4l2 2v4l-2 2h-4l-2 -2v-4zM507.5 346.5h4l2 2v4l-2 2h-4l-2 -2v-4zM509.5 330.5h4l2 2v4l-2 2h-4l-2 -2v-4zM510.5 310.5h4l2 2v4l-2 2h-4l-2 -2v-4zM511.5 350.5h4l2 2v4l-2 2h-4l-2 -2v-4zM512.5 330.5h4l2 2v4l-2 2h-4l-2 -2v-4zM514.5 326.5h4l2 2v4l-2 2h-4l-2 -2v-4zM515.5 300.5h4l2 2v4l-2 2h-4l-2 -2v-4zM516.5 341.5h4l2 2v4l-2 2h-4l-2 -2v-4zM517.5 334.5h4l2 2v4l-2 2h-4l-2 -2v-4zM519.5 320.5h4l2 2v4l-2 2h-4l-2 -2v-4zM520.5 309.5h4l2 2v4l-2 2h-4l-2 -2v-4zM521.5 316.5h4l2 2v4l-2 2h-4l-2 -2v-4zM522.5 316.5h4l2 2v4l-2 2h-4l-2 -2v-4zM524.5 331.5h4l2 2v4l-2 2h-4l-2 -2v-4zM525.5 326.5h4l2 2v4l-2 2h-4l-2 -2v-4zM526.5 306.5h4l2 2v4l-2 2h-4l-2 -2v-4zM527.5 320.5h4l2 2v4l-2 2h-4l-2 -2v-4zM528.5 328.5h4l2 2v4l-2 2h-4l-2 -2v-4zM530.5 324.5h4l2 2v4l-2 2h-4l-2 -2v-4zM531.5 304.5h4l2 2v4l-2 2h-4l-2 -2v-4zM532.5 300.5h4l2 2v4l-2 2h-4l-2 -2v-4zM533.5 315.5h4l2 2v4l-2 2h-4l-2 -2v-4zM535.5 329.5h4l2 2v4l-2 2h-4l-2 -2v-4zM536.5 299.5h4l2 2v4l-2 2h-4l-2 -2v-4zM537.5 327.5h4l2 2v4l-2 2h-4l-2 -2v-4zM538.5 318.5h4l2 2v4l-2 2h-4l-2 -2v-4zM540.5 314.5h4l2 2v4l-2 2h-4l-2 -2v-4zM541.5 319.5h4l2 2v4l-2 2h-4l-2 -2v-4zM542.5 321.5h4l2 2v4l-2 2h-4l-2 -2v-4zM543.5 299.5h4l2 2v4l-2 2h-4l-2 -2v-4z" stroke="#000000" stroke-width="1" fill="none"/>
<path d="M128.5 346v1M128.5 356v1M130.5 345v1M130.5 355v1M131.5 353v1M131.5 363v1M132.5 348v1M132.5 358v1M133.5 354v1M133.5 364v1M135.5 348v1M135.5 358v1M136.5 351v1M136.5 361v1M137.5 353v1M137.5 363v1M138.5 356v1M138.5 366v1M139.5 349v1M139.5 359v1M141.5 349v1M141.5 359v1M142.5 343v1M142.5 353v1M143.5 350v1M143.5 360v1M144.5 344v1M144.5 354v1M146.5 343v1M146.5 353v1M147.5 342v1M147.5 352v1M148.5 340v1M148.5 350v1M149.5 338v1M149.5 348v1M151.5 340v1M151.5 350v1M152.5 340v1M152.5 350v1M153.5 336v1M153.5 346v1M154.5 330v1M154.5 340v1M155.5 324v1M155.5 334v1M157.5 325v1M157.5 335v1M158.5 324v1M158.5 334v1M159.5 324v1M159.5 334v1M160.5 323v1M160.5 333v1M162.5 325v1M162.5 335v1M163.5 322v1M163.5 332v1M164.5 317v1M164.5 327v1M165.5 326v1M165.5 336v1M167.5 327v1M167.5 337v1M168.5 315v1M168.5 325v1M169.5 322v1M169.5 332v1M170.5 319v1M170.5 329v1M172.5 319v1M172.5 329v1M173.5 328v1M173.5 338v1M174.5 311v1M174.5 321v1M175.5 314v1M175.5 324v1M176.5 321v1M176.5 331v1M178.5 318v1M178.5 328v1M179.5 320v1M179.5 330v1M180.5 325v1M180.5 335v1M181.5 320v1M181.5 330v1M183.5 318v1M183.5 328v1M184.5 313v1M184.5 323v1M185.5 314v1M185.5 324v1M186.5 317v1M186.5 327v1M188.5 309v1M188.5 319v1M189.5 318v1M189.5 328v1M190.5 310v1M190.5 320v1M191.5 307v1M191.5 317v1M192.5 313v1M192.5 323v1M194.5 319v1M194.5 329v1M195.5 314v1M195.5 324v1M196.5 307v1M196.5 317v1M197.5 305v1M197.5 315v1M199.5 299v1M199.5 309v1M200.5 311v1M200.5 321v1M201.5 305v1M201.5 315v1M202.5 301v1M202.5 311v1M204.5 305v1M204.5 315v1M205.5 315v2M205.5 326v2M206.5 299v2M206.5 310v2M207.5 292v2M207.5 303v2M209.5 299v2M209.5 310v2M210.5 309v2M210.5 320v2M211.5 307v2M211.5 318v2M212.5 305v2M212.5 316v2M213.5 295v2M213.5 306v2M215.5 306v2M215.5 317v2M216.5 310v2M216.5 321v2M217.5 304v2M217.5 315v2M218.5 314v2M218.5 325v2M220.5 306v2M220.5 317v2M221.5 321v2M221.5 332v2M222.5 322v2M222.5 333v2M223.5 317v2M223.5 328v2M225.5 316v2M225.5 327v2M226.5 322v2M226.5 333v2M227.5 325v2M227.5 336v2M228.5 338v2M228.5 349v2M229.5 334v2M229.5 345v2M231.5 335v2M231.5 346v2M232.5 336v2M232.5 347v2M233.5 331v2M233.5 342v2M234.5 337v2M234.5 348v2M236.5 332v2M236.5 343v2M237.5 336v2M237.5 347v2M238.5 339v2M238.5 350v2M239.5 337v2M239.5 348v2M241.5 335v2M241.5 346v2M242.5 332v2M242.5 343v2M243.5 339v2M243.5 350v2M244.5 337v2M244.5 348v2M246.5 342v2M246.5 353v2M247.5 324v2M247.5 335v2M248.5 324v2M248.5 335v2M249.5 331v2M249.5 342v2M250.5 331v2M250.5 342v2M252.5 334v2M252.5 345v2M253.5 324v2M253.5 335v2M254.5 322v2M254.5 333v2M255.5 309v2M255.5 320v2M257.5 318v2M257.5 329v2M258.5 322v2M258.5 333v2M259.5 330v2M259.5 341v2M260.5 306v2M260.5 317v2M262.5 311v2M262.5 322v2M263.5 320v2M263.5 331v2M264.5 308v2M264.5 319v2M265.5 318v2M265.5 329v2M266.5 287v2M266.5 298v2M268.5 300v2M268.5 311v2M269.5 301v3M269.5 313v3M270.5 305v3M270.5 317v3M271.5 317v3M271.5 329v3M273.5 305v3M273.5 317v3M274.5 314v3M274.5 326v3M275.5 301v3M275.5 313v3M276.5 318v3M276.5 330v3M278.5 312v3M278.5 324v3M279.5 300v3M279.5 312v3M280.5 299v3M280.5 311v3M281.5 317v3M281.5 329v3M283.5 320v3M283.5 332v3M284.5 307v3M284.5 319v3M285.5 309v3M285.5 321v3M286.5 322v3M286.5 334v3M287.5 321v3M287.5 333v3M289.5 323v3M289.5 335v3M290.5 327v3M290.5 339v3M291.5 326v3M291.5 338v3M292.5 315v3M292.5 327v3M294.5 320v3M294.5 332v3M295.5 312v3M295.5 324v3M296.5 327v3M296.5 339v3M297.5 328v3M297.5 340v3M299.5 334v3M299.5 346v3M300.5 329v3M300.5 341v3M301.5 337v3M301.5 349v3M302.5 340v3M302.5 352v3M303.5 324v3M303.5 336v3M305.5 319v3M305.5 331v3M306.5 323v3M306.5 335v3M307.5 319v3M307.5 331v3M308.5 326v3M308.5 338v3M310.5 331v3M310.5 343v3M311.5 325v3M311.5 337v3M312.5 327v3M312.5 339v3M313.5 331v3M313.5 343v3M315.5 334v3M315.5 346v3M316.5 331v3M316.5 343v3M317.5 320v3M317.5 332v3M318.5 318v3M318.5 330v3M320.5 321v3M320.5 333v3M321.5 307v3M321.5 319v3M322.5 314v3M322.5 326v3M323.5 311v3M323.5 323v3M324.5 304v4M324.5 317v4M326.5 317v4M326.5 330v4M327.5 324v4M327.5 337v4M328.5 305v4M328.5 318v4M329.5 315v4M329.5 328v4M331.5 301v4M331.5 314v4M332.5 307v4M332.5 320v4M333.5 303v4M333.5 316v4M334.5 304v4M334.5 317v4M336.5 324v4M336.5 337v4M337.5 305v4M337.5 318v4M338.5 316v4M338.5 329v4M339.5 317v4M339.5 330v4M340.5 315v4M340.5 328v4M342.5 307v4M342.5 320v4M343.5 307v4M343.5 320v4M344.5 307v4M344.5 320v4M345.5 327v4M345.5 340v4M347.5 321v4M347.5 334v4M348.5 335v4M348.5 348v4M349.5 319v4M349.5 332v4M350.5 315v4M350.5 328v4M352.5 326v4M352.5 339v4M353.5 319v4M353.5 332v4M354.5 320v4M354.5 333v4M355.5 315v4M355.5 328v4M357.5 329v4M357.5 342v4M358.5 330v4M358.5 343v4M359.5 330v4M359.5 343v4M360.5 311v4M360.5 324v4M361.5 316v4M361.5 329v4M363.5 325v4M363.5 338v4M364.5 323v4M364.5 336v4M365.5 323v4M365.5 336v4M366.5 322v4M366.5 335v4M368.5 325v4M368.5 338v4M369.5 325v4M369.5 338v4M370.5 332v4M370.5 345v4M371.5 325v5M371.5 339v5M373.5 307v5M373.5 321v5M374.5 315v5M374.5 329v5M375.5 318v5M375.5 332v5M376.5 319v5M376.5 333v5M377.5 316v5M377.5 330v5M379.5 313v5M379.5 327v5M380.5 320v5M380.5 334v5M381.5 312v5M381.5 326v5M382.5 311v5M382.5 325v5M384.5 319v5M384.5 333v5M385.5 318v5M385.5 332v5M386.5 319v5M386.5 333v5M387.5 320v5M387.5 334v5M389.5 304v5M389.5 318v5M390.5 330v5M390.5 344v5M391.5 313v5M391.5 327v5M392.5 315v5M392.5 329v5M394.5 316v5M394.5 330v5M395.5 310v5M395.5 324v5M396.5 302v5M396.5 316v5M397.5 311v5M397.5 325v5M398.5 313v5M398.5 327v5M400.5 317v5M400.5 331v5M401.5 314v5M401.5 328v5M402.5 306v5M402.5 320v5M403.5 317v5M403.5 331v5M405.5 324v5M405.5 338v5M406.5 326v5M406.5 340v5M407.5 326v5M407.5 340v5M408.5 329v5M408.5 343v5M410.5 308v5M410.5 322v5M411.5 315v5M411.5 329v5M412.5 321v5M412.5 335v5M413.5 307v5M413.5 321v5M414.5 325v6M414.5 340v6M416.5 313v6M416.5 328v6M417.5 313v6M417.5 328v6M418.5 334v6M418.5 349v6M419.5 334v6M419.5 349v6M421.5 329v6M421.5 344v6M422.5 313v6M422.5 328v6M423.5 309v6M423.5 324v6M424.5 331v6M424.5 346v6M426.5 311v6M426.5 326v6M427.5 324v6M427.5 339v6M428.5 323v6M428.5 338v6M429.5 324v6M429.5 339v6M431.5 322v6M431.5 337v6M432.5 335v6M432.5 350v6M433.5 327v6M433.5 342v6M434.5 328v6M434.5 343v6M435.5 312v6M435.5 327v6M437.5 297v6M437.5 312v6M438.5 291v6M438.5 306v6M439.5 318v6M439.5 333v6M440.5 330v6M440.5 345v6M442.5 318v6M442.5 333v6M443.5 322v6M443.5 337v6M444.5 294v6M444.5 309v6M445.5 307v6M445.5 322v6M447.5 319v6M447.5 334v6M448.5 303v6M448.5 318v6M449.5 306v6M449.5 321v6M450.5 327v6M450.5 342v6M451.5 316v6M451.5 331v6M453.5 313v7M453.5 329v7M454.5 310v7M454.5 326v7M455.5 309v7M455.5 325v7M456.5 314v7M456.5 330v7M458.5 309v7M458.5 325v7M459.5 317v7M459.5 333v7M460.5 320v7M460.5 336v7M461.5 297v7M461.5 313v7M463.5 309v7M463.5 325v7M464.5 308v7M464.5 324v7M465.5 329v7M465.5 345v7M466.5 315v7M466.5 331v7M468.5 306v7M468.5 322v7M469.5 327v7M469.5 343v7M470.5 304v7M470.5 320v7M471.5 319v7M471.5 335v7M472.5 312v7M472.5 328v7M474.5 332v7M474.5 348v7M475.5 315v7M475.5 331v7M476.5 305v7M476.5 321v7M477.5 321v7M477.5 337v7M479.5 302v7M479.5 318v7M480.5 326v7M480.5 342v7M481.5 327v7M481.5 343v7M482.5 311v7M482.5 327v7M484.5 329v7M484.5 345v7M485.5 322v7M485.5 338v7M486.5 308v7M486.5 324v7M487.5 304v8M487.5 321v8M489.5 335v8M489.5 352v8M490.5 311v8M490.5 328v8M491.5 296v8M491.5 313v8M492.5 303v8M492.5 320v8M493.5 318v8M493.5 335v8M495.5 321v8M495.5 338v8M496.5 317v8M496.5 334v8M497.5 326v8M497.5 343v8M498.5 316v8M498.5 333v8M500.5 315v8M500.5 332v8M501.5 314v8M501.5 331v8M502.5 300v8M502.5 317v8M503.5 315v8M503.5 332v8M505.5 328v8M505.5 345v8M506.5 300v8M506.5 317v8M507.5 323v8M507.5 340v8M508.5 316v8M508.5 333v8M509.5 313v8M509.5 330v8M511.5 315v8M511.5 332v8M512.5 322v8M512.5 339v8M513.5 314v8M513.5 331v8M514.5 287v8M514.5 304v8M516.5 318v8M516.5 335v8M517.5 313v8M517.5 330v8M518.5 299v8M518.5 316v8M519.5 302v9M519.5 320v9M521.5 302v9M521.5 320v9M522.5 301v9M522.5 319v9M523.5 289v9M523.5 307v9M524.5 321v9M524.5 339v9M526.5 310v9M526.5 328v9M527.5 306v9M527.5 324v9M528.5 297v9M528.5 315v9M529.5 307v9M529.5 325v9M530.5 316v9M530.5 334v9M532.5 313v9M532.5 331v9M533.5 316v9M533.5 334v9M534.5 311v9M534.5 329v9M535.5 306v9M535.5 324v9M537.5 335v9M537.5 353v9M538.5 324v9M538.5 342v9M539.5 324v9M539.5 342v9M540.5 301v9M540.5 319v9M542.5 299v9M542.5 317v9M543.5 303v9M543.5 321v9M544.5 304v9M544.5 322v9M545.5 304v9M545.5 322v9" stroke="#ff0000" stroke-width="1" fill="none" shape-rendering="crispEdges"/>
<path d="M61.5 499.5h8v8h-8zM63.5 482.5h8v8h-8zM64.5 466.5h8v8h-8zM65.5 458.5h8v8h-8zM66.5 446.5h8v8h-8zM68.5 427.5h8v8h-8zM69.5 410.5h8v8h-8zM70.5 392.5h8v8h-8zM71.5 385.5h8v8h-8zM73.5 370.5h8v8h-8zM74.5 348.5h8v8h-8zM75.5 334.5h8v8h-8zM76.5 316.5h8v8h-8zM77.5 304.5h8v8h-8zM79.5 295.5h8v8h-8zM80.5 284.5h8v8h-8zM81.5 263.5h8v8h-8zM82.5 263.5h8v8h-8zM84.5 256.5h8v8h-8zM85.5 249.5h8v8h-8zM86.5 238.5h8v8h-8zM87.5 232.5h8v8h-8zM89.5 229.5h8v8h-8zM90.5 225.5h8v8h-8zM91.5 221.5h8v8h-8zM92.5 218.5h8v8h-8zM94.5 217.5h8v8h-8zM95.5 221.5h8v8h-8zM96.5 230.5h8v8h-8zM97.5 223.5h8v8h-8zM98.5 235.5h8v8h-8zM100.5 234.5h8v8h-8zM101.5 244.5h8v8h-8zM102.5 244.5h8v8h-8zM103.5 253.5h8v8h-8zM105.5 255.5h8v8h-8zM106.5 250.5h8v8h-8zM107.5 270.5h8v8h-8zM108.5 273.5h8v8h-8zM110.5 289.5h8v8h-8zM111.5 292.5h8v8h-8zM112.5 295.5h8v8h-8zM113.5 304.5h8v8h-8zM114.5 309.5h8v8h-8zM116.5 316.5h8v8h-8zM117.5 326.5h8v8h-8zM118.5 325.5h8v8h-8zM119.5 336.5h8v8h-8zM121.5 329.5h8v8h-8zM122.5 343.5h8v8h-8zM123.5 342.5h8v8h-8zM124.5 347.5h8v8h-8zM126.5 346.5h8v8h-8zM127.5 354.5h8v8h-8zM128.5 349.5h8v8h-8zM129.5 355.5h8v8h-8zM131.5 349.5h8v8h-8zM132.5 352.5h8v8h-8zM133.5 354.5h8v8h-8zM134.5 357.5h8v8h-8zM135.5 350.5h8v8h-8zM137.5 350.5h8v8h-8zM138.5 344.5h8v8h-8zM139.5 351.5h8v8h-8zM140.5 345.5h8v8h-8zM142.5 344.5h8v8h-8zM143.5 343.5h8v8h-8zM144.5 341.5h8v8h-8zM145.5 339.5h8v8h-8zM147.5 341.5h8v8h-8zM148.5 341.5h8v8h-8zM149.5 337.5h8v8h-8zM150.5 331.5h8v8h-8zM151.5 325.5h8v8h-8zM153.5 326.5h8v8h-8zM154.5 325.5h8v8h-8zM155.5 325.5h8v8h-8zM156.5 324.5h8v8h-8zM158.5 326.5h8v8h-8zM159.5 323.5h8v8h-8zM160.5 318.5h8v8h-8zM161.5 327.5h8v8h-8zM163.5 328.5h8v8h-8zM164.5 316.5h8v8h-8zM165.5 323.5h8v8h-8zM166.5 320.5h8v8h-8zM168.5 320.5h8v8h-8zM169.5 329.5h8v8h-8zM170.5 312.5h8v8h-8zM171.5 315.5h8v8h-8zM172.5 322.5h8v8h-8zM174.5 319.5h8v8h-8zM175.5 321.5h8v8h-8zM176.5 326.5h8v8h-8zM177.5 321.5h8v8h-8zM179.5 319.5h8v8h-8zM180.5 314.5h8v8h-8zM181.5 315.5h8v8h-8zM182.5 318.5h8v8h-8zM184.5 310.5h8v8h-8zM185.5 319.5h8v8h-8zM186.5 311.5h8v8h-8zM187.5 308.5h8v8h-8zM188.5 314.5h8v8h-8zM190.5 320.5h8v8h-8zM191.5 315.5h8v8h-8zM192.5 308.5h8v8h-8zM193.5 306.5h8v8h-8zM195.5 300.5h8v8h-8zM196.5 312.5h8v8h-8zM197.5 306.5h8v8h-8zM198.5 302.5h8v8h-8zM200.5 306.5h8v8h-8zM201.5 317.5h8v8h-8zM202.5 301.5h8v8h-8zM203.5 294.5h8v8h-8zM205.5 301.5h8v8h-8zM206.5 311.5h8v8h-8zM207.5 309.5h8v8h-8zM208.5 307.5h8v8h-8zM209.5 297.5h8v8h-8zM211.5 308.5h8v8h-8zM212.5 312.5h8v8h-8zM213.5 306.5h8v8h-8zM214.5 316.5h8v8h-8zM216.5 308.5h8v8h-8zM217.5 323.5h8v8h-8zM218.5 324.5h8v8h-8zM219.5 319.5h8v8h-8zM221.5 318.5h8v8h-8zM222.5 324.5h8v8h-8zM223.5 327.5h8v8h-8zM224.5 340.5h8v8h-8zM225.5 336.5h8v8h-8zM227.5 337.5h8v8h-8zM228.5 338.5h8v8h-8zM229.5 333.5h8v8h-8zM230.5 339.5h8v8h-8zM232.5 334.5h8v8h-8zM233.5 338.5h8v8h-8zM234.5 341.5h8v8h-8zM235.5 339.5h8v8h-8zM237.5 337.5h8v8h-8zM238.5 334.5h8v8h-8zM239.5 341.5h8v8h-8zM240.5 339.5h8v8h-8zM242.5 344.5h8v8h-8zM243.5 326.5h8v8h-8zM244.5 326.5h8v8h-8zM245.5 333.5h8v8h-8zM246.5 333.5h8v8h-8zM248.5 336.5h8v8h-8zM249.5 326.5h8v8h-8zM250.5 324.5h8v8h-8zM251.5 311.5h8v8h-8zM253.5 320.5h8v8h-8zM254.5 324.5h8v8h-8zM255.5 332.5h8v8h-8zM256.5 308.5h8v8h-8zM258.5 313.5h8v8h-8zM259.5 322.5h8v8h-8zM260.5 310.5h8v8h-8zM261.5 320.5h8v8h-8zM262.5 289.5h8v8h-8zM264.5 302.5h8v8h-8zM265.5 304.5h8v8h-8zM266.5 308.5h8v8h-8zM267.5 320.5h8v8h-8zM269.5 308.5h8v8h-8zM270.5 317.5h8v8h-8zM271.5 304.5h8v8h-8zM272.5 321.5h8v8h-8zM274.5 315.5h8v8h-8zM275.5 303.5h8v8h-8zM276.5 302.5h8v8h-8zM277.5 320.5h8v8h-8zM279.5 323.5h8v8h-8zM280.5 310.5h8v8h-8zM281.5 312.5h8v8h-8zM282.5 325.5h8v8h-8zM283.5 324.5h8v8h-8zM285.5 326.5h8v8h-8zM286.5 330.5h8v8h-8zM287.5 329.5h8v8h-8zM288.5 318.5h8v8h-8zM290.5 323.5h8v8h-8zM291.5 315.5h8v8h-8zM292.5 330.5h8v8h-8zM293.5 331.5h8v8h-8zM295.5 337.5h8v8h-8zM296.5 332.5h8v8h-8zM297.5 340.5h8v8h-8zM298.5 343.5h8v8h-8zM299.5 327.5h8v8h-8zM301.5 322.5h8v8h-8zM302.5 326.5h8v8h-8zM303.5 322.5h8v8h-8zM304.5 329.5h8v8h-8zM306.5 334.5h8v8h-8zM307.5 328.5h8v8h-8zM308.5 330.5h8v8h-8zM309.5 334.5h8v8h-8zM311.5 337.5h8v8h-8zM312.5 334.5h8v8h-8zM313.5 323.5h8v8h-8zM314.5 321.5h8v8h-8zM316.5 324.5h8v8h-8zM317.5 310.5h8v8h-8zM318.5 317.5h8v8h-8zM319.5 314.5h8v8h-8zM320.5 308.5h8v8h-8zM322.5 321.5h8v8h-8zM323.5 328.5h8v8h-8zM324.5 309.5h8v8h-8zM325.5 319.5h8v8h-8zM327.5 305.5h8v8h-8zM328.5 311.5h8v8h-8zM329.5 307.5h8v8h-8zM330.5 308.5h8v8h-8zM332.5 328.5h8v8h-8zM333.5 309.5h8v8h-8zM334.5 320.5h8v8h-8zM335.5 321.5h8v8h-8zM336.5 319.5h8v8h-8zM338.5 311.5h8v8h-8zM339.5 311.5h8v8h-8zM340.5 311.5h8v8h-8zM341.5 331.5h8v8h-8zM343.5 325.5h8v8h-8zM344.5 339.5h8v8h-8zM345.5 323.5h8v8h-8zM346.5 319.5h8v8h-8zM348.5 330.5h8v8h-8zM349.5 323.5h8v8h-8zM350.5 324.5h8v8h-8zM351.5 319.5h8v8h-8zM353.5 333.5h8v8h-8zM354.5 334.5h8v8h-8zM355.5 334.5h8v8h-8zM356.5 315.5h8v8h-8zM357.5 320.5h8v8h-8zM359.5 329.5h8v8h-8zM360.5 327.5h8v8h-8zM361.5 327.5h8v8h-8zM362.5 326.5h8v8h-8zM364.5 329.5h8v8h-8zM365.5 329.5h8v8h-8zM366.5 336.5h8v8h-8zM367.5 330.5h8v8h-8zM369.5 312.5h8v8h-8zM370.5 320.5h8v8h-8zM371.5 323.5h8v8h-8zM372.5 324.5h8v8h-8zM373.5 321.5h8v8h-8zM375.5 318.5h8v8h-8zM376.5 325.5h8v8h-8zM377.5 317.5h8v8h-8zM378.5 316.5h8v8h-8zM380.5 324.5h8v8h-8zM381.5 323.5h8v8h-8zM382.5 324.5h8v8h-8zM383.5 325.5h8v8h-8zM385.5 309.5h8v8h-8zM386.5 335.5h8v8h-8zM387.5 318.5h8v8h-8zM388.5 320.5h8v8h-8zM390.5 321.5h8v8h-8zM391.5 315.5h8v8h-8zM392.5 307.5h8v8h-8zM393.5 316.5h8v8h-8zM394.5 318.5h8v8h-8zM396.5 322.5h8v8h-8zM397.5 319.5h8v8h-8zM398.5 311.5h8v8h-8zM399.5 322.5h8v8h-8zM401.5 329.5h8v8h-8zM402.5 331.5h8v8h-8zM403.5 331.5h8v8h-8zM404.5 334.5h8v8h-8zM406.5 313.5h8v8h-8zM407.5 320.5h8v8h-8zM408.5 326.5h8v8h-8zM409.5 312.5h8v8h-8zM410.5 331.5h8v8h-8zM412.5 319.5h8v8h-8zM413.5 319.5h8v8h-8zM414.5 340.5h8v8h-8zM415.5 340.5h8v8h-8zM417.5 335.5h8v8h-8zM418.5 319.5h8v8h-8zM419.5 315.5h8v8h-8zM420.5 337.5h8v8h-8zM422.5 317.5h8v8h-8zM423.5 330.5h8v8h-8zM424.5 329.5h8v8h-8zM425.5 330.5h8v8h-8zM427.5 328.5h8v8h-8zM428.5 341.5h8v8h-8zM429.5 333.5h8v8h-8zM430.5 334.5h8v8h-8zM431.5 318.5h8v8h-8zM433.5 303.5h8v8h-8zM434.5 297.5h8v8h-8zM435.5 324.5h8v8h-8zM436.5 336.5h8v8h-8zM438.5 324.5h8v8h-8zM439.5 328.5h8v8h-8zM440.5 300.5h8v8h-8zM441.5 313.5h8v8h-8zM443.5 325.5h8v8h-8zM444.5 309.5h8v8h-8zM445.5 312.5h8v8h-8zM446.5 333.5h8v8h-8zM447.5 322.5h8v8h-8zM449.5 320.5h8v8h-8zM450.5 317.5h8v8h-8zM451.5 316.5h8v8h-8zM452.5 321.5h8v8h-8zM454.5 316.5h8v8h-8zM455.5 324.5h8v8h-8zM456.5 327.5h8v8h-8zM457.5 304.5h8v8h-8zM459.5 316.5h8v8h-8zM460.5 315.5h8v8h-8zM461.5 336.5h8v8h-8zM462.5 322.5h8v8h-8zM464.5 313.5h8v8h-8zM465.5 334.5h8v8h-8zM466.5 311.5h8v8h-8zM467.5 326.5h8v8h-8zM468.5 319.5h8v8h-8zM470.5 339.5h8v8h-8zM471.5 322.5h8v8h-8zM472.5 312.5h8v8h-8zM473.5 328.5h8v8h-8zM475.5 309.5h8v8h-8zM476.5 333.5h8v8h-8zM477.5 334.5h8v8h-8zM478.5 318.5h8v8h-8zM480.5 336.5h8v8h-8zM481.5 329.5h8v8h-8zM482.5 315.5h8v8h-8zM483.5 312.5h8v8h-8zM485.5 343.5h8v8h-8zM486.5 319.5h8v8h-8zM487.5 304.5h8v8h-8zM488.5 311.5h8v8h-8zM489.5 326.5h8v8h-8zM491.5 329.5h8v8h-8zM492.5 325.5h8v8h-8zM493.5 334.5h8v8h-8zM494.5 324.5h8v8h-8zM496.5 323.5h8v8h-8zM497.5 322.5h8v8h-8zM498.5 308.5h8v8h-8zM499.5 323.5h8v8h-8zM501.5 336.5h8v8h-8zM502.5 308.5h8v8h-8zM503.5 331.5h8v8h-8zM504.5 324.5h8v8h-8zM505.5 321.5h8v8h-8zM507.5 323.5h8v8h-8zM508.5 330.5h8v8h-8zM509.5 322.5h8v8h-8zM510.5 295.5h8v8h-8zM512.5 326.5h8v8h-8zM513.5 321.5h8v8h-8zM514.5 307.5h8v8h-8zM515.5 311.5h8v8h-8zM517.5 311.5h8v8h-8zM518.5 310.5h8v8h-8zM519.5 298.5h8v8h-8zM520.5 330.5h8v8h-8zM522.5 319.5h8v8h-8zM523.5 315.5h8v8h-8zM524.5 306.5h8v8h-8zM525.5 316.5h8v8h-8zM526.5 325.5h8v8h-8zM528.5 322.5h8v8h-8zM529.5 325.5h8v8h-8zM530.5 320.5h8v8h-8zM531.5 315.5h8v8h-8zM533.5 344.5h8v8h-8zM534.5 333.5h8v8h-8zM535.5 333.5h8v8h-8zM536.5 310.5h8v8h-8zM538.5 308.5h8v8h-8zM539.5 312.5h8v8h-8zM540.5 313.5h8v8h-8zM541.5 313.5h8v8h-8z" stroke="#ff0000" stroke-width="1" fill="none"/>
<polyline points="64,511.69 64.6,506.57 65.2,501.18 65.8,495.52 66.39,489.61 66.99,483.48 67.59,477.14 68.19,470.6 68.79,463.89 69.39,457.02 69.99,450.01 70.59,442.87 71.19,435.63 71.78,428.31 72.38,420.91 72.98,413.46 73.58,405.98 74.18,398.48 74.78,390.97 75.38,383.49 75.98,376.03 76.57,368.63 77.17,361.28 77.77,354.02 78.37,346.84 78.97,339.78 79.57,332.84 80.17,326.03 80.77,319.37 81.36,312.86 81.96,306.53 82.56,300.39 83.16,294.43 83.76,288.68 84.36,283.13 84.96,277.81 85.56,272.72 86.15,267.86 86.75,263.24 87.35,258.87 87.95,254.75 88.55,250.89 89.15,247.29 89.75,243.95 90.35,240.88 90.94,238.08 91.54,235.54 92.14,233.27 92.74,231.27 93.34,229.54 93.94,228.07 94.54,226.86 95.14,225.91 95.73,225.22 96.33,224.79 96.93,224.59 97.53,224.65 98.13,224.93 98.73,225.45 99.33,226.19 99.93,227.15 100.52,228.32 101.12,229.68 101.72,231.25 102.32,232.99 102.92,234.91 103.52,237 104.12,239.24 104.72,241.63 105.31,244.15 105.91,246.81 106.51,249.58 107.11,252.46 107.71,255.44 108.31,258.5 108.91,261.64 109.51,264.84 110.1,268.1 110.7,271.41 111.3,274.76 111.9,278.13 112.5,281.51 113.1,284.91 113.7,288.3 114.3,291.68 114.89,295.04 115.49,298.38 116.09,301.67 116.69,304.93 117.29,308.13 117.89,311.27 118.49,314.35 119.09,317.35 119.68,320.28 120.28,323.12 120.88,325.87 121.48,328.53 122.08,331.1 122.68,333.55 123.28,335.91 123.88,338.15 124.47,340.28 125.07,342.3 125.67,344.2 126.27,345.99 126.87,347.65 127.47,349.2 128.07,350.63 128.67,351.94 129.26,353.13 129.86,354.2 130.46,355.15 131.06,355.99 131.66,356.72 132.26,357.33 132.86,357.84 133.46,358.24 134.05,358.54 134.65,358.74 135.25,358.84 135.85,358.85 136.45,358.78 137.05,358.62 137.65,358.38 138.25,358.06 138.84,357.67 139.44,357.22 140.04,356.7 140.64,356.13 141.24,355.5 141.84,354.83 142.44,354.11 143.04,353.36 143.63,352.57 144.23,351.75 144.83,350.91 145.43,350.04 146.03,349.16 146.63,348.27 147.23,347.37 147.83,346.47 148.42,345.57 149.02,344.67 149.62,343.78 150.22,342.89 150.82,342.03 151.42,341.17 152.02,340.34 152.62,339.52 153.21,338.73 153.81,337.97 154.41,337.23 155.01,336.52 155.61,335.83 156.21,335.18 156.81,334.56 157.41,333.97 158,333.42 158.6,332.89 159.2,332.4 159.8,331.94 160.4,331.52 161,331.12 161.6,330.75 162.2,330.42 162.79,330.11 163.39,329.82 163.99,329.57 164.59,329.34 165.19,329.12 165.79,328.93 166.39,328.76 166.99,328.61 167.58,328.47 168.18,328.34 168.78,328.23 169.38,328.12 169.98,328.02 170.58,327.93 171.18,327.84 171.78,327.74 172.37,327.65 172.97,327.55 173.57,327.45 174.17,327.34 174.77,327.23 175.37,327.1 175.97,326.96 176.57,326.81 177.16,326.64 177.76,326.46 178.36,326.26 178.96,326.04 179.56,325.8 180.16,325.55 180.76,325.27 181.36,324.98 181.95,324.66 182.55,324.33 183.15,323.97 183.75,323.6 184.35,323.2 184.95,322.79 185.55,322.36 186.15,321.91 186.74,321.45 187.34,320.97 187.94,320.48 188.54,319.98 189.14,319.46 189.74,318.94 190.34,318.41 190.93,317.88 191.53,317.34 192.13,316.81 192.73,316.27 193.33,315.74 193.93,315.21 194.53,314.69 195.13,314.18 195.72,313.68 196.32,313.2 196.92,312.73 197.52,312.29 198.12,311.86 198.72,311.46 199.32,311.09 199.92,310.74 200.51,310.42 201.11,310.13 201.71,309.88 202.31,309.67 202.91,309.49 203.51,309.34 204.11,309.24 204.71,309.18 205.3,309.16 205.9,309.19 206.5,309.26 207.1,309.37 207.7,309.53 208.3,309.73 208.9,309.98 209.5,310.28 210.09,310.62 210.69,311 211.29,311.43 211.89,311.9 212.49,312.42 213.09,312.97 213.69,313.57 214.29,314.21 214.88,314.88 215.48,315.59 216.08,316.33 216.68,317.1 217.28,317.91 217.88,318.74 218.48,319.59 219.08,320.47 219.67,321.37 220.27,322.28 220.87,323.21 221.47,324.15 222.07,325.09 222.67,326.04 223.27,327 223.87,327.95 224.46,328.9 225.06,329.85 225.66,330.78 226.26,331.7 226.86,332.6 227.46,333.48 228.06,334.35 228.66,335.18 229.25,335.99 229.85,336.77 230.45,337.52 231.05,338.22 231.65,338.9 232.25,339.53 232.85,340.12 233.45,340.66 234.04,341.16 234.64,341.61 235.24,342.01 235.84,342.35 236.44,342.65 237.04,342.89 237.64,343.08 238.24,343.22 238.83,343.3 239.43,343.32 240.03,343.29 240.63,343.2 241.23,343.06 241.83,342.87 242.43,342.62 243.03,342.32 243.62,341.96 244.22,341.56 244.82,341.1 245.42,340.6 246.02,340.05 246.62,339.46 247.22,338.83 247.82,338.16 248.41,337.45 249.01,336.71 249.61,335.93 250.21,335.13 250.81,334.29 251.41,333.44 252.01,332.56 252.61,331.67 253.2,330.76 253.8,329.84 254.4,328.91 255,327.98 255.6,327.05 256.2,326.12 256.8,325.19 257.4,324.27 257.99,323.36 258.59,322.46 259.19,321.58 259.79,320.72 260.39,319.89 260.99,319.08 261.59,318.29 262.19,317.54 262.78,316.82 263.38,316.14 263.98,315.49 264.58,314.88 265.18,314.32 265.78,313.8 266.38,313.32 266.98,312.89 267.57,312.5 268.17,312.17 268.77,311.88 269.37,311.64 269.97,311.45 270.57,311.32 271.17,311.23 271.77,311.19 272.36,311.21 272.96,311.27 273.56,311.39 274.16,311.55 274.76,311.76 275.36,312.02 275.96,312.32 276.56,312.66 277.15,313.05 277.75,313.48 278.35,313.94 278.95,314.44 279.55,314.98 280.15,315.55 280.75,316.15 281.35,316.77 281.94,317.42 282.54,318.09 283.14,318.79 283.74,319.5 284.34,320.22 284.94,320.95 285.54,321.7 286.14,322.44 286.73,323.2 287.33,323.95 287.93,324.7 288.53,325.44 289.13,326.17 289.73,326.9 290.33,327.61 290.93,328.3 291.52,328.98 292.12,329.64 292.72,330.27 293.32,330.88 293.92,331.46 294.52,332.01 295.12,332.53 295.72,333.01 296.31,333.47 296.91,333.88 297.51,334.26 298.11,334.61 298.71,334.91 299.31,335.17 299.91,335.4 300.51,335.58 301.1,335.72 301.7,335.82 302.3,335.88 302.9,335.9 303.5,335.88 304.1,335.81 304.7,335.71 305.3,335.57 305.89,335.39 306.49,335.18 307.09,334.92 307.69,334.64 308.29,334.32 308.89,333.97 309.49,333.59 310.09,333.18 310.68,332.75 311.28,332.29 311.88,331.81 312.48,331.31 313.08,330.79 313.68,330.25 314.28,329.71 314.88,329.15 315.47,328.58 316.07,328.01 316.67,327.43 317.27,326.85 317.87,326.27 318.47,325.69 319.07,325.12 319.67,324.56 320.26,324 320.86,323.46 321.46,322.93 322.06,322.42 322.66,321.92 323.26,321.45 323.86,320.99 324.46,320.56 325.05,320.15 325.65,319.77 326.25,319.41 326.85,319.08 327.45,318.79 328.05,318.52 328.65,318.28 329.25,318.08 329.84,317.9 330.44,317.76 331.04,317.66 331.64,317.58 332.24,317.54 332.84,317.54 333.44,317.56 334.04,317.62 334.63,317.71 335.23,317.83 335.83,317.98 336.43,318.17 337.03,318.38 337.63,318.62 338.23,318.88 338.83,319.17 339.42,319.49 340.02,319.82 340.62,320.18 341.22,320.56 341.82,320.96 342.42,321.37 343.02,321.79 343.62,322.23 344.21,322.68 344.81,323.13 345.41,323.6 346.01,324.07 346.61,324.54 347.21,325.01 347.81,325.48 348.41,325.95 349,326.41 349.6,326.87 350.2,327.31 350.8,327.75 351.4,328.18 352,328.59 352.6,328.99 353.2,329.37 353.79,329.73 354.39,330.07 354.99,330.39 355.59,330.69 356.19,330.97 356.79,331.23 357.39,331.45 357.99,331.66 358.58,331.83 359.18,331.98 359.78,332.11 360.38,332.2 360.98,332.27 361.58,332.31 362.18,332.32 362.78,332.31 363.37,332.26 363.97,332.19 364.57,332.1 365.17,331.97 365.77,331.82 366.37,331.65 366.97,331.45 367.57,331.23 368.16,330.99 368.76,330.73 369.36,330.45 369.96,330.15 370.56,329.83 371.16,329.49 371.76,329.15 372.36,328.78 372.95,328.41 373.55,328.03 374.15,327.64 374.75,327.24 375.35,326.84 375.95,326.44 376.55,326.03 377.15,325.62 377.74,325.22 378.34,324.81 378.94,324.42 379.54,324.03 380.14,323.64 380.74,323.27 381.34,322.91 381.94,322.55 382.53,322.22 383.13,321.89 383.73,321.59 384.33,321.3 384.93,321.02 385.53,320.77 386.13,320.54 386.73,320.32 387.32,320.13 387.92,319.96 388.52,319.82 389.12,319.69 389.72,319.59 390.32,319.52 390.92,319.46 391.52,319.43 392.11,319.43 392.71,319.45 393.31,319.49 393.91,319.55 394.51,319.64 395.11,319.75 395.71,319.88 396.31,320.04 396.9,320.21 397.5,320.4 398.1,320.62 398.7,320.85 399.3,321.09 399.9,321.35 400.5,321.63 401.1,321.92 401.69,322.22 402.29,322.54 402.89,322.86 403.49,323.19 404.09,323.53 404.69,323.87 405.29,324.22 405.89,324.57 406.48,324.92 407.08,325.27 407.68,325.63 408.28,325.97 408.88,326.32 409.48,326.66 410.08,326.99 410.68,327.31 411.27,327.63 411.87,327.93 412.47,328.23 413.07,328.51 413.67,328.78 414.27,329.03 414.87,329.27 415.47,329.49 416.06,329.7 416.66,329.89 417.26,330.06 417.86,330.21 418.46,330.34 419.06,330.45 419.66,330.55 420.26,330.62 420.85,330.67 421.45,330.71 422.05,330.72 422.65,330.71 423.25,330.68 423.85,330.64 424.45,330.57 425.05,330.49 425.64,330.38 426.24,330.26 426.84,330.12 427.44,329.97 428.04,329.79 428.64,329.61 429.24,329.41 429.84,329.19 430.43,328.96 431.03,328.73 431.63,328.48 432.23,328.22 432.83,327.95 433.43,327.67 434.03,327.39 434.63,327.11 435.22,326.82 435.82,326.53 436.42,326.23 437.02,325.94 437.62,325.64 438.22,325.35 438.82,325.06 439.42,324.78 440.01,324.49 440.61,324.22 441.21,323.95 441.81,323.69 442.41,323.44 443.01,323.2 443.61,322.97 444.21,322.76 444.8,322.55 445.4,322.36 446,322.18 446.6,322.02 447.2,321.87 447.8,321.73 448.4,321.61 449,321.51 449.59,321.42 450.19,321.35 450.79,321.3 451.39,321.26 451.99,321.24 452.59,321.23 453.19,321.25 453.79,321.27 454.38,321.32 454.98,321.38 455.58,321.45 456.18,321.54 456.78,321.65 457.38,321.77 457.98,321.9 458.58,322.04 459.17,322.2 459.77,322.37 460.37,322.55 460.97,322.73 461.57,322.93 462.17,323.14 462.77,323.35 463.37,323.57 463.96,323.79 464.56,324.02 465.16,324.25 465.76,324.49 466.36,324.72 466.96,324.96 467.56,325.2 468.16,325.43 468.75,325.67 469.35,325.9 469.95,326.13 470.55,326.35 471.15,326.57 471.75,326.78 472.35,326.99 472.95,327.18 473.54,327.37 474.14,327.55 474.74,327.72 475.34,327.88 475.94,328.03 476.54,328.17 477.14,328.3 477.74,328.41 478.33,328.51 478.93,328.6 479.53,328.68 480.13,328.74 480.73,328.79 481.33,328.83 481.93,328.85 482.53,328.86 483.12,328.86 483.72,328.85 484.32,328.82 484.92,328.78 485.52,328.72 486.12,328.66 486.72,328.58 487.32,328.49 487.91,328.39 488.51,328.28 489.11,328.17 489.71,328.04 490.31,327.9 490.91,327.76 491.51,327.6 492.11,327.45 492.7,327.28 493.3,327.11 493.9,326.94 494.5,326.76 495.1,326.58 495.7,326.39 496.3,326.21 496.9,326.02 497.49,325.84 498.09,325.65 498.69,325.46 499.29,325.28 499.89,325.1 500.49,324.93 501.09,324.75 501.69,324.58 502.28,324.42 502.88,324.26 503.48,324.11 504.08,323.97 504.68,323.83 505.28,323.71 505.88,323.59 506.48,323.47 507.07,323.37 507.67,323.28 508.27,323.2 508.87,323.12 509.47,323.06 510.07,323.01 510.67,322.96 511.27,322.93 511.86,322.91 512.46,322.9 513.06,322.89 513.66,322.9 514.26,322.92 514.86,322.95 515.46,322.99 516.06,323.04 516.65,323.09 517.25,323.16 517.85,323.23 518.45,323.31 519.05,323.4 519.65,323.5 520.25,323.6 520.85,323.71 521.44,323.83 522.04,323.95 522.64,324.08 523.24,324.21 523.84,324.34 524.44,324.48 525.04,324.62 525.64,324.76 526.23,324.9 526.83,325.05 527.43,325.19 528.03,325.34 528.63,325.48 529.23,325.62 529.83,325.76 530.43,325.9 531.02,326.03 531.62,326.16 532.22,326.29 532.82,326.41 533.42,326.53 534.02,326.64 534.62,326.75 535.22,326.85 535.81,326.95 536.41,327.03 537.01,327.11 537.61,327.19 538.21,327.25 538.81,327.31 539.41,327.36 540.01,327.41 540.6,327.44 541.2,327.47 541.8,327.49 542.4,327.5 543,327.5" stroke="#ff0000" stroke-width="1.4" fill="none" shape-rendering="crispEdges"/>
<polyline points="64,137.75 64.6,142.68 65.2,147.91 65.8,153.4 66.39,159.14 66.99,165.12 67.59,171.32 68.19,177.73 68.79,184.31 69.39,191.07 69.99,197.97 70.59,205 71.19,212.15 71.78,219.4 72.38,226.72 72.98,234.1 73.58,241.53 74.18,248.99 74.78,256.45 75.38,263.91 75.98,271.34 76.57,278.74 77.17,286.07 77.77,293.34 78.37,300.53 78.97,307.61 79.57,314.58 80.17,321.42 80.77,328.13 81.36,334.68 81.96,341.06 82.56,347.27 83.16,353.3 83.76,359.12 84.36,364.74 84.96,370.15 85.56,375.33 86.15,380.28 86.75,385 87.35,389.47 87.95,393.7 88.55,397.67 89.15,401.38 89.75,404.83 90.35,408.02 90.94,410.95 91.54,413.6 92.14,416 92.74,418.12 93.34,419.98 93.94,421.57 94.54,422.9 95.14,423.98 95.73,424.79 96.33,425.35 96.93,425.67 97.53,425.74 98.13,425.57 98.73,425.17 99.33,424.54 99.93,423.7 100.52,422.64 101.12,421.38 101.72,419.93 102.32,418.28 102.92,416.46 103.52,414.47 104.12,412.32 104.72,410.02 105.31,407.57 105.91,405 106.51,402.3 107.11,399.5 107.71,396.59 108.31,393.59 108.91,390.51 109.51,387.35 110.1,384.14 110.7,380.88 111.3,377.57 111.9,374.24 112.5,370.88 113.1,367.52 113.7,364.15 114.3,360.78 114.89,357.44 115.49,354.11 116.09,350.82 116.69,347.57 117.29,344.37 117.89,341.22 118.49,338.13 119.09,335.12 119.68,332.17 120.28,329.31 120.88,326.54 121.48,323.85 122.08,321.26 122.68,318.77 123.28,316.39 123.88,314.11 124.47,311.94 125.07,309.89 125.67,307.94 126.27,306.12 126.87,304.41 127.47,302.82 128.07,301.35 128.67,299.99 129.26,298.76 129.86,297.64 130.46,296.64 131.06,295.75 131.66,294.98 132.26,294.31 132.86,293.76 133.46,293.31 134.05,292.97 134.65,292.72 135.25,292.57 135.85,292.52 136.45,292.55 137.05,292.67 137.65,292.87 138.25,293.15 138.84,293.5 139.44,293.92 140.04,294.4 140.64,294.94 141.24,295.53 141.84,296.17 142.44,296.86 143.04,297.59 143.63,298.35 144.23,299.15 144.83,299.97 145.43,300.81 146.03,301.67 146.63,302.54 147.23,303.42 147.83,304.31 148.42,305.2 149.02,306.09 149.62,306.97 150.22,307.84 150.82,308.71 151.42,309.55 152.02,310.38 152.62,311.19 153.21,311.98 153.81,312.74 154.41,313.48 155.01,314.19 155.61,314.87 156.21,315.53 156.81,316.15 157.41,316.74 158,317.3 158.6,317.82 159.2,318.32 159.8,318.78 160.4,319.21 161,319.61 161.6,319.98 162.2,320.33 162.79,320.64 163.39,320.93 163.99,321.19 164.59,321.42 165.19,321.64 165.79,321.83 166.39,322 166.99,322.16 167.58,322.3 168.18,322.43 168.78,322.55 169.38,322.66 169.98,322.76 170.58,322.85 171.18,322.95 171.78,323.04 172.37,323.13 172.97,323.22 173.57,323.33 174.17,323.43 174.77,323.55 175.37,323.67 175.97,323.81 176.57,323.96 177.16,324.12 177.76,324.3 178.36,324.5 178.96,324.72 179.56,324.95 180.16,325.2 180.76,325.47 181.36,325.76 181.95,326.08 182.55,326.41 183.15,326.76 183.75,327.13 184.35,327.52 184.95,327.93 185.55,328.36 186.15,328.81 186.74,329.27 187.34,329.75 187.94,330.24 188.54,330.75 189.14,331.26 189.74,331.78 190.34,332.32 190.93,332.85 191.53,333.39 192.13,333.94 192.73,334.48 193.33,335.02 193.93,335.56 194.53,336.08 195.13,336.6 195.72,337.11 196.32,337.6 196.92,338.08 197.52,338.54 198.12,338.98 198.72,339.39 199.32,339.78 199.92,340.15 200.51,340.48 201.11,340.78 201.71,341.05 202.31,341.29 202.91,341.48 203.51,341.64 204.11,341.76 204.71,341.84 205.3,341.88 205.9,341.87 206.5,341.83 207.1,341.73 207.7,341.59 208.3,341.41 208.9,341.18 209.5,340.9 210.09,340.58 210.69,340.22 211.29,339.81 211.89,339.35 212.49,338.86 213.09,338.32 213.69,337.74 214.29,337.11 214.88,336.46 215.48,335.76 216.08,335.03 216.68,334.27 217.28,333.48 217.88,332.66 218.48,331.81 219.08,330.94 219.67,330.06 220.27,329.15 220.87,328.22 221.47,327.29 222.07,326.34 222.67,325.39 223.27,324.44 223.87,323.48 224.46,322.53 225.06,321.58 225.66,320.64 226.26,319.72 226.86,318.81 227.46,317.91 228.06,317.04 228.66,316.19 229.25,315.37 229.85,314.58 230.45,313.82 231.05,313.09 231.65,312.4 232.25,311.75 232.85,311.15 233.45,310.58 234.04,310.07 234.64,309.6 235.24,309.17 235.84,308.8 236.44,308.48 237.04,308.22 237.64,308.01 238.24,307.85 238.83,307.74 239.43,307.7 240.03,307.7 240.63,307.77 241.23,307.89 241.83,308.06 242.43,308.28 243.03,308.56 243.62,308.9 244.22,309.28 244.82,309.71 245.42,310.19 246.02,310.72 246.62,311.29 247.22,311.91 247.82,312.56 248.41,313.26 249.01,313.99 249.61,314.75 250.21,315.54 250.81,316.36 251.41,317.21 252.01,318.07 252.61,318.96 253.2,319.86 253.8,320.77 254.4,321.7 255,322.63 255.6,323.56 256.2,324.49 256.8,325.42 257.4,326.34 257.99,327.26 258.59,328.16 259.19,329.04 259.79,329.91 260.39,330.76 260.99,331.58 261.59,332.37 262.19,333.13 262.78,333.87 263.38,334.56 263.98,335.22 264.58,335.85 265.18,336.43 265.78,336.97 266.38,337.46 266.98,337.91 267.57,338.32 268.17,338.67 268.77,338.98 269.37,339.24 269.97,339.44 270.57,339.6 271.17,339.71 271.77,339.76 272.36,339.77 272.96,339.73 273.56,339.63 274.16,339.49 274.76,339.3 275.36,339.06 275.96,338.78 276.56,338.45 277.15,338.08 277.75,337.67 278.35,337.22 278.95,336.74 279.55,336.22 280.15,335.66 280.75,335.07 281.35,334.46 281.94,333.82 282.54,333.16 283.14,332.48 283.74,331.77 284.34,331.06 284.94,330.33 285.54,329.59 286.14,328.85 286.73,328.1 287.33,327.35 287.93,326.6 288.53,325.85 289.13,325.12 289.73,324.39 290.33,323.67 290.93,322.97 291.52,322.29 292.12,321.63 292.72,320.99 293.32,320.37 293.92,319.78 294.52,319.22 295.12,318.69 295.72,318.19 296.31,317.73 296.91,317.3 297.51,316.9 298.11,316.54 298.71,316.23 299.31,315.95 299.91,315.71 300.51,315.51 301.1,315.35 301.7,315.24 302.3,315.16 302.9,315.13 303.5,315.13 304.1,315.18 304.7,315.27 305.3,315.39 305.89,315.56 306.49,315.76 307.09,316 307.69,316.27 308.29,316.58 308.89,316.91 309.49,317.28 310.09,317.68 310.68,318.1 311.28,318.55 311.88,319.02 312.48,319.52 313.08,320.03 313.68,320.55 314.28,321.09 314.88,321.65 315.47,322.21 316.07,322.78 316.67,323.36 317.27,323.93 317.87,324.51 318.47,325.09 319.07,325.66 319.67,326.23 320.26,326.79 320.86,327.33 321.46,327.87 322.06,328.38 322.66,328.89 323.26,329.37 323.86,329.83 324.46,330.27 325.05,330.69 325.65,331.08 326.25,331.45 326.85,331.79 327.45,332.09 328.05,332.37 328.65,332.62 329.25,332.84 329.84,333.02 330.44,333.18 331.04,333.29 331.64,333.38 332.24,333.43 332.84,333.45 333.44,333.44 334.04,333.39 334.63,333.31 335.23,333.21 335.83,333.06 336.43,332.89 337.03,332.69 337.63,332.47 338.23,332.21 338.83,331.93 339.42,331.62 340.02,331.3 340.62,330.95 341.22,330.58 341.82,330.19 342.42,329.78 343.02,329.36 343.62,328.93 344.21,328.49 344.81,328.03 345.41,327.57 346.01,327.11 346.61,326.64 347.21,326.17 347.81,325.7 348.41,325.23 349,324.76 349.6,324.3 350.2,323.85 350.8,323.41 351.4,322.98 352,322.57 352.6,322.16 353.2,321.78 353.79,321.41 354.39,321.06 354.99,320.73 355.59,320.42 356.19,320.13 356.79,319.87 357.39,319.63 357.99,319.42 358.58,319.24 359.18,319.08 359.78,318.94 360.38,318.84 360.98,318.76 361.58,318.71 362.18,318.69 362.78,318.69 363.37,318.72 363.97,318.78 364.57,318.87 365.17,318.98 365.77,319.12 366.37,319.29 366.97,319.47 367.57,319.68 368.16,319.92 368.76,320.17 369.36,320.45 369.96,320.74 370.56,321.05 371.16,321.38 371.76,321.72 372.36,322.08 372.95,322.45 373.55,322.83 374.15,323.21 374.75,323.61 375.35,324.01 375.95,324.41 376.55,324.82 377.15,325.22 377.74,325.63 378.34,326.03 378.94,326.43 379.54,326.82 380.14,327.21 380.74,327.59 381.34,327.95 381.94,328.31 382.53,328.65 383.13,328.98 383.73,329.29 384.33,329.59 384.93,329.87 385.53,330.13 386.13,330.37 386.73,330.59 387.32,330.79 387.92,330.97 388.52,331.12 389.12,331.26 389.72,331.37 390.32,331.45 390.92,331.51 391.52,331.55 392.11,331.57 392.71,331.56 393.31,331.52 393.91,331.47 394.51,331.39 395.11,331.29 395.71,331.16 396.31,331.02 396.9,330.85 397.5,330.67 398.1,330.46 398.7,330.24 399.3,330 399.9,329.74 400.5,329.47 401.1,329.19 401.69,328.89 402.29,328.58 402.89,328.26 403.49,327.94 404.09,327.6 404.69,327.26 405.29,326.91 405.89,326.57 406.48,326.21 407.08,325.86 407.68,325.51 408.28,325.16 408.88,324.82 409.48,324.48 410.08,324.14 410.68,323.81 411.27,323.5 411.87,323.19 412.47,322.89 413.07,322.6 413.67,322.33 414.27,322.07 414.87,321.82 415.47,321.6 416.06,321.38 416.66,321.19 417.26,321.01 417.86,320.85 418.46,320.71 419.06,320.59 419.66,320.49 420.26,320.41 420.85,320.35 421.45,320.31 422.05,320.29 422.65,320.29 423.25,320.31 423.85,320.35 424.45,320.41 425.05,320.49 425.64,320.58 426.24,320.7 426.84,320.83 427.44,320.98 428.04,321.14 428.64,321.32 429.24,321.52 429.84,321.73 430.43,321.95 431.03,322.19 431.63,322.43 432.23,322.69 432.83,322.95 433.43,323.22 434.03,323.5 434.63,323.78 435.22,324.07 435.82,324.36 436.42,324.66 437.02,324.95 437.62,325.24 438.22,325.54 438.82,325.83 439.42,326.11 440.01,326.4 440.61,326.67 441.21,326.94 441.81,327.2 442.41,327.46 443.01,327.7 443.61,327.93 444.21,328.16 444.8,328.37 445.4,328.56 446,328.75 446.6,328.92 447.2,329.07 447.8,329.21 448.4,329.34 449,329.45 449.59,329.54 450.19,329.62 450.79,329.68 451.39,329.72 451.99,329.75 452.59,329.76 453.19,329.75 453.79,329.73 454.38,329.69 454.98,329.64 455.58,329.57 456.18,329.49 456.78,329.39 457.38,329.27 457.98,329.15 458.58,329.01 459.17,328.86 459.77,328.69 460.37,328.52 460.97,328.34 461.57,328.14 462.17,327.94 462.77,327.73 463.37,327.52 463.96,327.29 464.56,327.07 465.16,326.84 465.76,326.6 466.36,326.37 466.96,326.13 467.56,325.89 468.16,325.66 468.75,325.42 469.35,325.19 469.95,324.96 470.55,324.74 471.15,324.52 471.75,324.3 472.35,324.09 472.95,323.89 473.54,323.7 474.14,323.52 474.74,323.35 475.34,323.18 475.94,323.03 476.54,322.89 477.14,322.76 477.74,322.64 478.33,322.53 478.93,322.44 479.53,322.36 480.13,322.29 480.73,322.23 481.33,322.19 481.93,322.16 482.53,322.15 483.12,322.14 483.72,322.15 484.32,322.18 484.92,322.21 485.52,322.26 486.12,322.32 486.72,322.39 487.32,322.48 487.91,322.57 488.51,322.68 489.11,322.79 489.71,322.92 490.31,323.05 490.91,323.19 491.51,323.34 492.11,323.5 492.7,323.66 493.3,323.83 493.9,324 494.5,324.17 495.1,324.35 495.7,324.54 496.3,324.72 496.9,324.91 497.49,325.09 498.09,325.28 498.69,325.46 499.29,325.65 499.89,325.83 500.49,326.01 501.09,326.18 501.69,326.35 502.28,326.51 502.88,326.67 503.48,326.83 504.08,326.97 504.68,327.11 505.28,327.24 505.88,327.36 506.48,327.48 507.07,327.58 507.67,327.68 508.27,327.77 508.87,327.85 509.47,327.91 510.07,327.97 510.67,328.02 511.27,328.05 511.86,328.08 512.46,328.1 513.06,328.1 513.66,328.1 514.26,328.08 514.86,328.06 515.46,328.02 516.06,327.98 516.65,327.93 517.25,327.86 517.85,327.79 518.45,327.71 519.05,327.63 519.65,327.53 520.25,327.43 520.85,327.33 521.44,327.21 522.04,327.09 522.64,326.97 523.24,326.84 523.84,326.71 524.44,326.57 525.04,326.43 525.64,326.29 526.23,326.15 526.83,326.01 527.43,325.86 528.03,325.72 528.63,325.57 529.23,325.43 529.83,325.29 530.43,325.15 531.02,325.02 531.62,324.89 532.22,324.76 532.82,324.63 533.42,324.51 534.02,324.4 534.62,324.29 535.22,324.19 535.81,324.09 536.41,324 537.01,323.92 537.61,323.84 538.21,323.77 538.81,323.71 539.41,323.66 540.01,323.61 540.6,323.57 541.2,323.54 541.8,323.52 542.4,323.51 543,323.5" stroke="#000000" stroke-width="1.4" fill="none" shape-rendering="crispEdges"/></g>
 <rect x="64.5" y="130.5" width="479" height="391" stroke="#000" stroke-width="1" fill="none"/>
 <path d="M64.5 521V509M76.5 521V515M88.5 521V515M100.5 521V515M112.5 521V515M124.5 521V509M136.5 521V515M148.5 521V515M160.5 521V515M172.5 521V515M184.5 521V509M196.5 521V515M208.5 521V515M220.5 521V515M232.5 521V515M244.5 521V509M256.5 521V515M268.5 521V515M280.5 521V515M292.5 521V515M304.5 521V509M315.5 521V515M327.5 521V515M339.5 521V515M351.5 521V515M363.5 521V509M375.5 521V515M387.5 521V515M399.5 521V515M411.5 521V515M423.5 521V509M435.5 521V515M447.5 521V515M459.5 521V515M471.5 521V515M483.5 521V509M495.5 521V515M507.5 521V515M519.5 521V515M531.5 521V515M543.5 521V509M64 521.5H80M64 511.5H73M64 501.5H73M64 492.5H73M64 482.5H73M64 472.5H80M64 462.5H73M64 453.5H73M64 443.5H73M64 433.5H73M64 423.5H80M64 413.5H73M64 404.5H73M64 394.5H73M64 384.5H73M64 374.5H80M64 365.5H73M64 355.5H73M64 345.5H73M64 335.5H73M64 326.5H80M64 316.5H73M64 306.5H73M64 296.5H73M64 286.5H73M64 277.5H80M64 267.5H73M64 257.5H73M64 247.5H73M64 238.5H73M64 228.5H80M64 218.5H73M64 208.5H73M64 198.5H73M64 189.5H73M64 179.5H80M64 169.5H73M64 159.5H73M64 150.5H73M64 140.5H73M64 130.5H80" stroke="#000" stroke-width="1" fill="none"/>
 <g font-family="Liberation Sans" font-size="16" fill="#000"><text x="64" y="536" text-anchor="middle">0</text><text x="123.88" y="536" text-anchor="middle">0.5</text><text x="183.75" y="536" text-anchor="middle">1</text><text x="243.62" y="536" text-anchor="middle">1.5</text><text x="303.5" y="536" text-anchor="middle">2</text><text x="363.38" y="536" text-anchor="middle">2.5</text><text x="423.25" y="536" text-anchor="middle">3</text><text x="483.12" y="536" text-anchor="middle">3.5</text><text x="543" y="536" text-anchor="middle">4</text><text x="61" y="526.5" text-anchor="end">−0.2</text><text x="61" y="477.62" text-anchor="end">−0.15</text><text x="61" y="428.75" text-anchor="end">−0.1</text><text x="61" y="379.88" text-anchor="end">−0.05</text><text x="61" y="331" text-anchor="end">0</text><text x="61" y="282.12" text-anchor="end">0.05</text><text x="61" y="233.25" text-anchor="end">0.1</text><text x="61" y="184.37" text-anchor="end">0.15</text><text x="61" y="135.5" text-anchor="end">0.2</text></g>
 <text x="543" y="553" text-anchor="end" font-family="Liberation Sans" font-size="16">Time (μs)</text>
 <text transform="translate(25 130) rotate(-90)" text-anchor="end" font-family="Liberation Sans" font-size="16">N(t) per nsec</text>
 <path d="M603.5 570 V82.5 H803 M603.5 341.5 H803 M5 570.5 H803" stroke="#000" stroke-width="1" fill="none"/>
 <g font-family="Liberation Mono" font-weight="normal" font-size="8.5" letter-spacing="0.3" fill="#000" stroke="#000" stroke-width="0.3"><text x="609.5" y="93.5">1</text><text x="625" y="93.5">NormUp</text><text x="690" y="93.5">4542.1</text><text x="744.5" y="93.5">3.1</text><text x="609.5" y="106.4">2</text><text x="625" y="106.4">BgUp</text><text x="690" y="106.4">204.5</text><text x="744.5" y="106.4">1.0</text><text x="609.5" y="119.3">3</text><text x="625" y="119.3">PhaseUp</text><text x="690" y="119.3">18.43</text><text x="744.5" y="119.3">0.65</text><text x="609.5" y="132.2">4</text><text x="625" y="132.2">NormDown</text><text x="690" y="132.2">4360.3</text><text x="744.5" y="132.2">3.0</text><text x="609.5" y="145.1">5</text><text x="625" y="145.1">BgDown</text><text x="690" y="145.1">217.6</text><text x="744.5" y="145.1">1.0</text><text x="609.5" y="158">6</text><text x="625" y="158">PhaseDown</text><text x="690" y="158">199.81</text><text x="744.5" y="158">0.62</text><text x="609.5" y="170.9">7</text><text x="625" y="170.9">NormRight</text><text x="690" y="170.9">621.1</text><text x="744.5" y="170.9">1.1</text><text x="609.5" y="183.8">8</text><text x="625" y="183.8">BgRight</text><text x="690" y="183.8">42.62</text><text x="744.5" y="183.8">0.38</text><text x="609.5" y="196.7">9</text><text x="625" y="196.7">PhaseRight</text><text x="690" y="196.7">287.0</text><text x="744.5" y="196.7">1.4</text><text x="609.5" y="209.6">10</text><text x="625" y="209.6">AsymSig1</text><text x="690" y="209.6">0.1853</text><text x="744.5" y="209.6">0.0028</text><text x="609.5" y="222.5">11</text><text x="625" y="222.5">RateSig1</text><text x="690" y="222.5">2.312</text><text x="744.5" y="222.5">0.043</text><text x="609.5" y="235.4">12</text><text x="625" y="235.4">FieldSig1</text><text x="690" y="235.4">101.36</text><text x="744.5" y="235.4">0.37</text><text x="609.5" y="248.3">13</text><text x="625" y="248.3">AsymSig2</text><text x="690" y="248.3">0.01716</text><text x="744.5" y="248.3">0.00098</text><text x="609.5" y="261.2">14</text><text x="625" y="261.2">RateSig2</text><text x="690" y="261.2">0.514</text><text x="744.5" y="261.2">0.045</text><text x="609.5" y="274.1">15</text><text x="625" y="274.1">FieldSig2</text><text x="690" y="274.1">146.32</text><text x="744.5" y="274.1">0.31</text></g>
 <g font-family="Liberation Mono" font-weight="bold" font-size="12" letter-spacing="1.22" fill="#000" stroke="#000" stroke-width="0.35"><text x="609" y="366" xml:space="preserve">asymmetry     10</text><text x="609" y="377.5" xml:space="preserve">simplExpo     11</text><text x="609" y="389" xml:space="preserve">TFieldCos   map1  fun1</text><text x="609" y="400" xml:space="preserve">+</text><text x="609" y="411.5" xml:space="preserve">asymmetry     13</text><text x="609" y="423" xml:space="preserve">simpleGss     14</text><text x="609" y="434.5" xml:space="preserve">TFieldCos   map1  fun2</text><text x="609" y="457" xml:space="preserve">fun1 = gamma_mu * par12</text><text x="609" y="468.5" xml:space="preserve">fun2 = gamma_mu * par15</text></g>
 <g font-family="Liberation Sans" font-weight="bold" font-size="9" fill="#000">
  <text x="24.5" y="584">musrfit: 2018-06-30, 13:19:40, chisq = 1329 , NDF = 1145 , chisq/NDF = 1.1606986899563319</text>
  <text x="204" y="603">data/deltat_pta_gps_3110,h:3 ,T0=4.50K,T1=4.70K,B=150.00G,E=??,Y124 TF150G 4.5K (ab)</text>
  <text x="204" y="622">data/deltat_pta_gps_3110,h:4 ,T0=4.50K,T1=4.70K,B=150.00G,E=??,Y124 TF150G 4.5K (ab)</text>
 </g>
 <path d="M102.5 595.5h4l2 2v4l-2 2h-4l-2 -2v-4z" stroke="#000" fill="none"/>
 <rect x="100.5" y="614.5" width="8" height="8" stroke="#f00" fill="none"/>
</svg>
</body></html>
